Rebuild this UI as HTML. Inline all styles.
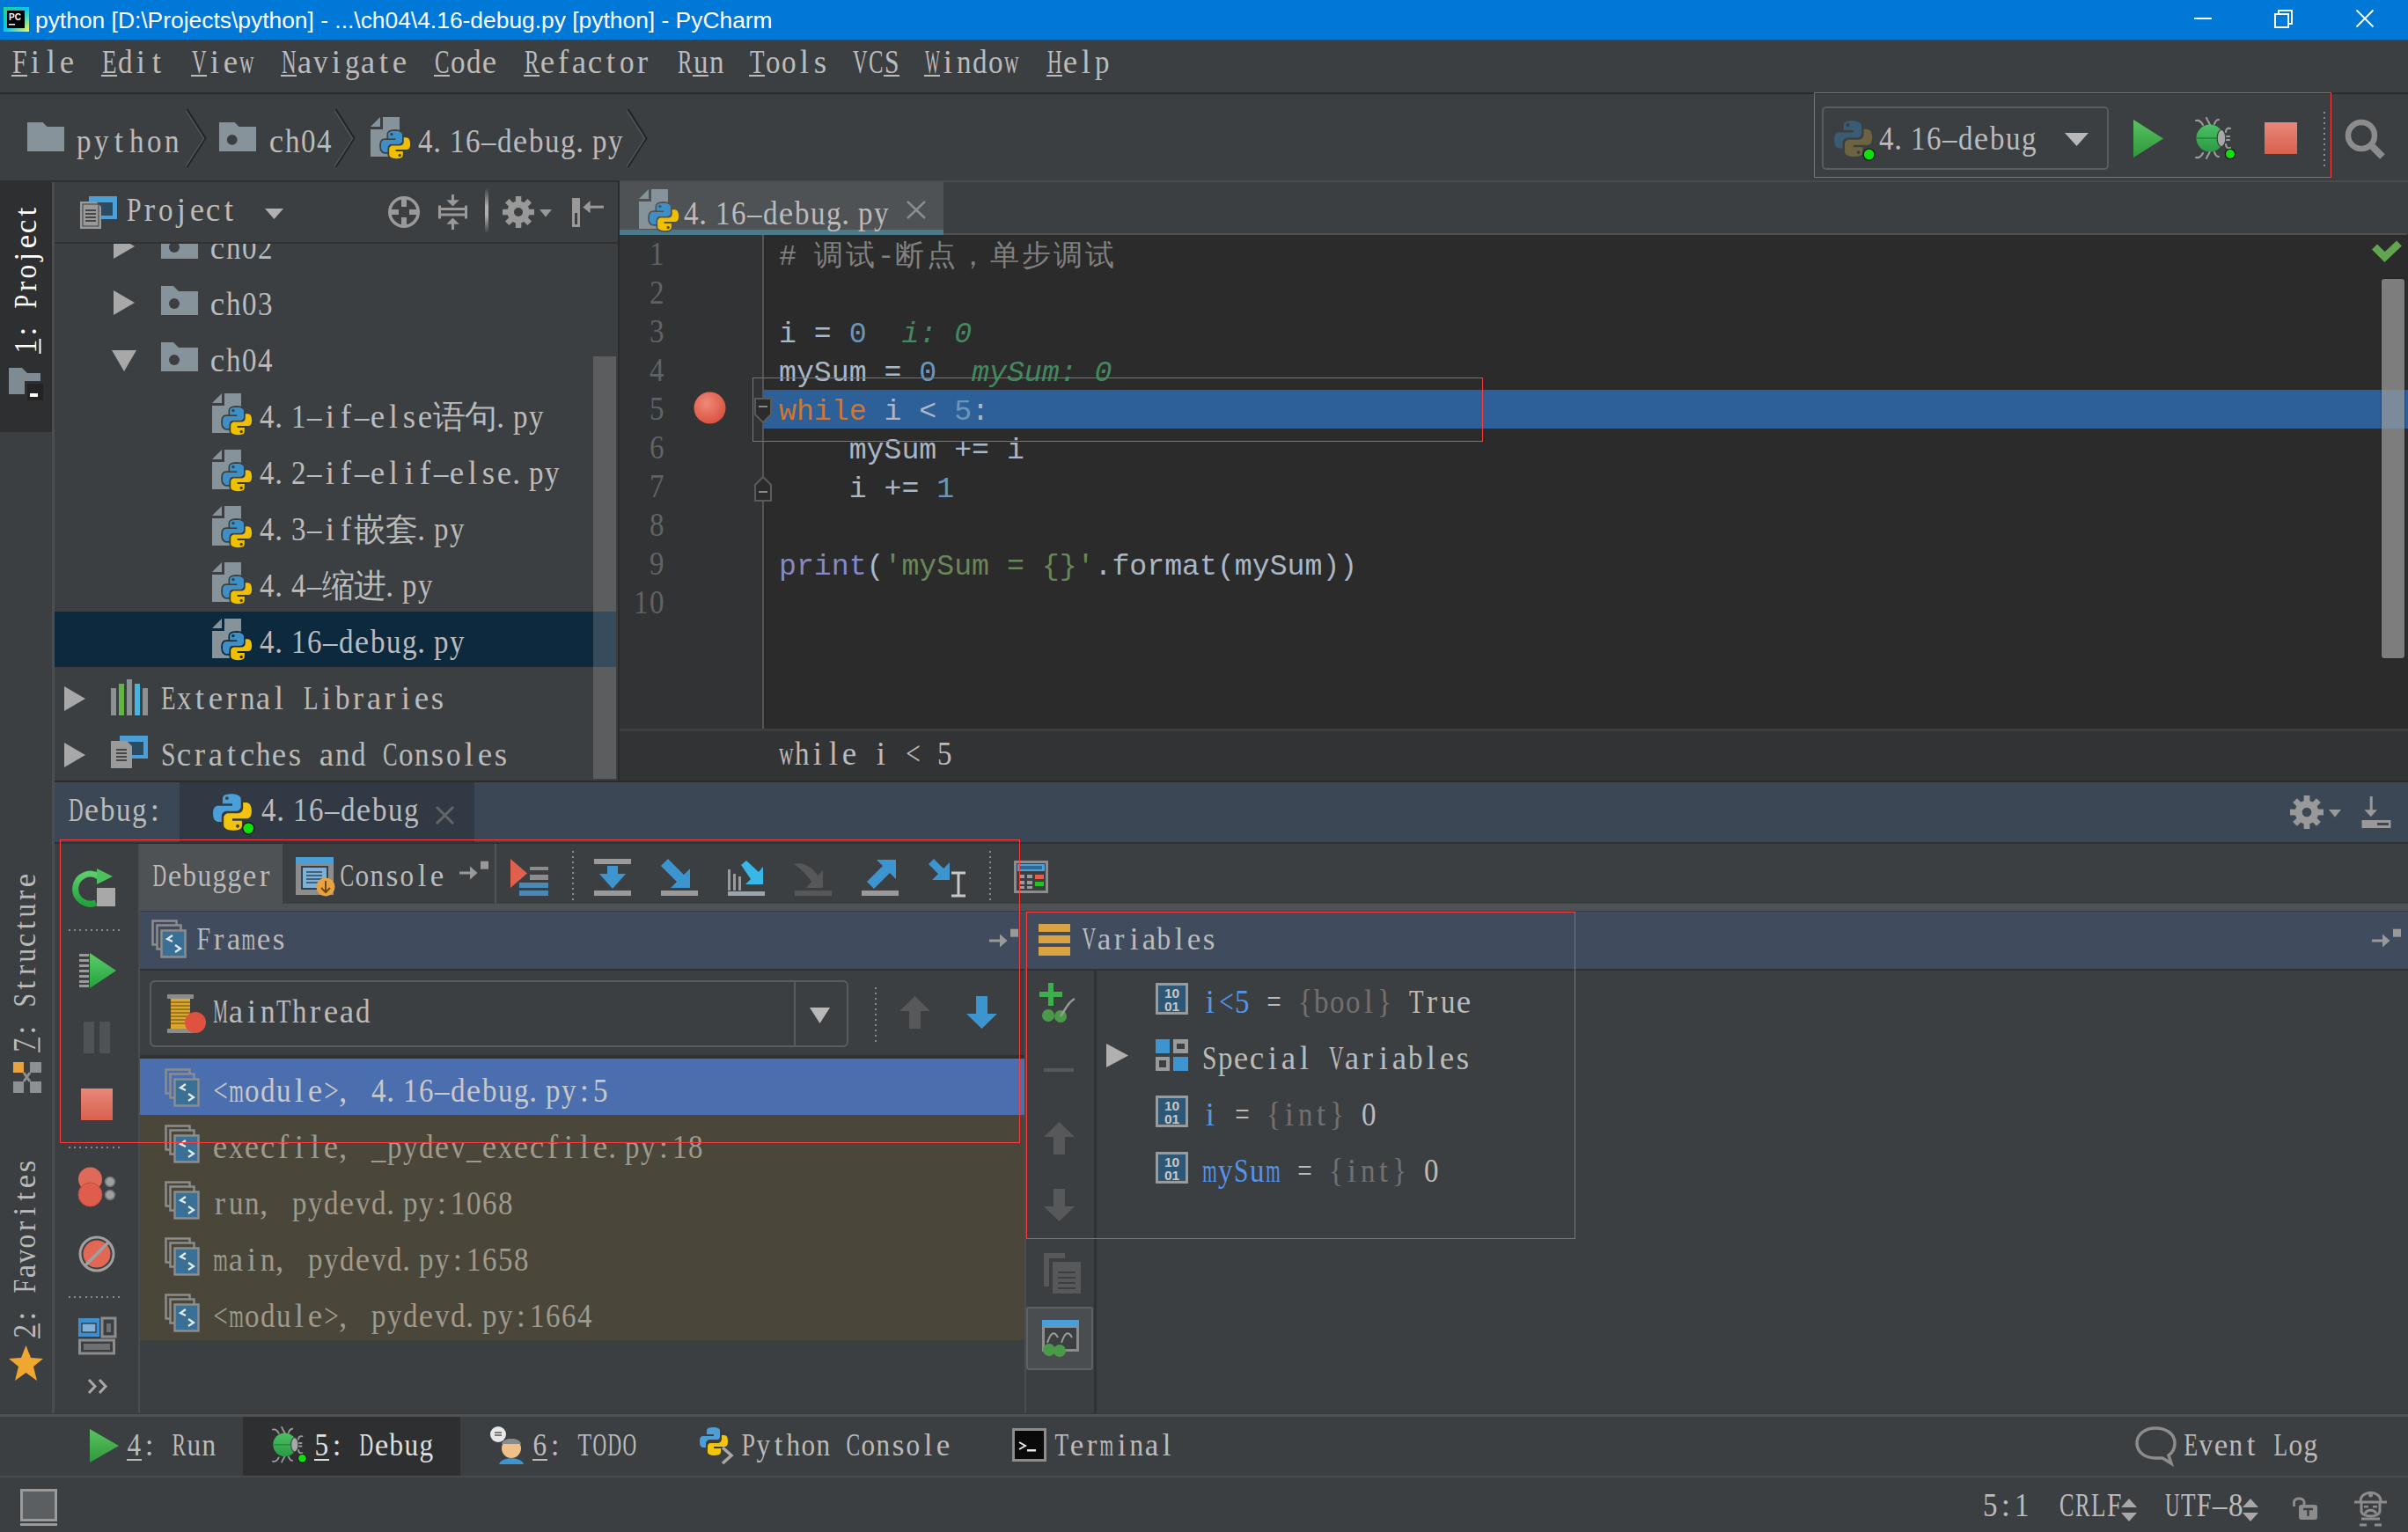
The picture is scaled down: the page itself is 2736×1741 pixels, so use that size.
<!DOCTYPE html>
<html><head><meta charset="utf-8">
<style>
*{margin:0;padding:0;box-sizing:border-box}
html,body{width:2736px;height:1741px;overflow:hidden;background:#3c3f41;position:relative}
.a{position:absolute}
.t{position:absolute;white-space:pre;font-family:"Liberation Serif",serif;font-size:37px;color:#bbbbbb;line-height:1}
.t i{display:inline-block;width:18px;text-align:center;font-style:normal}
.t i.u{background:linear-gradient(currentColor,currentColor) no-repeat 0 33px/100% 2px}
.t b{display:inline-block;font-weight:normal}
.v{font-size:35px}.v i{width:17px}.w20 i{width:20px}
.c{position:absolute;white-space:pre;font-family:"Liberation Mono",monospace;font-size:33.2px;line-height:1;color:#a9b7c6}
.s{position:absolute;white-space:pre;font-family:"Liberation Sans",sans-serif;line-height:1}
u{text-decoration:underline;text-decoration-thickness:2px;text-underline-offset:4px;}
svg{position:absolute;overflow:visible}
.k{color:#cc7832}.n{color:#6897bb}.st{color:#6a8759}.b{color:#8888c6}.cm{color:#808080}.iv{color:#43895f;font-style:italic}
</style></head><body>
<div class="a" style="left:0px;top:0px;width:2736px;height:45px;background:#0078d7;"></div>
<div class="s" style="left:40px;top:10px;font-size:26.4px;color:#ffffff">python [D:\Projects\python] - ...\ch04\4.16-debug.py [python] - PyCharm</div>
<svg style="left:4px;top:8px;" width="29" height="28" viewBox="0 0 29 28"><defs><linearGradient id="pcg" x1="0" y1="0" x2="1" y2="1"><stop offset="0" stop-color="#21d789"/><stop offset="0.5" stop-color="#07c3f2"/><stop offset="1" stop-color="#fcf84a"/></linearGradient></defs><rect width="29" height="28" fill="url(#pcg)"/><rect x="4" y="4" width="20" height="20" fill="#000"/><text x="6" y="15" font-family="Liberation Sans" font-weight="bold" font-size="10" fill="#fff">PC</text><rect x="6" y="19" width="7" height="1.5" fill="#fff"/></svg>
<div class="a" style="left:2493px;top:20px;width:20px;height:2px;background:#ffffff;"></div>
<svg style="left:2584px;top:11px;" width="21" height="21" viewBox="0 0 21 21"><rect x="1" y="5" width="15" height="15" fill="none" stroke="#fff" stroke-width="2"/><path d="M5 5V1H20V16H16" fill="none" stroke="#fff" stroke-width="2"/></svg>
<svg style="left:2677px;top:11px;" width="20" height="20" viewBox="0 0 20 20"><path d="M0.5 0.5L19.5 19.5M19.5 0.5L0.5 19.5" stroke="#fff" stroke-width="1.8"/></svg>
<div class="a" style="left:0px;top:45px;width:2736px;height:60px;background:#3c3f41;"></div>
<div class="a" style="left:0px;top:105px;width:2736px;height:2px;background:#2b2b2b;"></div>
<div class="t" style="left:13px;top:52px;color:#bbbbbb;"><i class="u"><b style="width:20.6px;margin-left:-1.3px;transform:scaleX(0.802)">F</b></i><i>i</i><i>l</i><i>e</i></div>
<div class="t" style="left:115px;top:52px;color:#bbbbbb;"><i class="u"><b style="width:22.6px;margin-left:-2.3px;transform:scaleX(0.730)">E</b></i><i><b style="width:18.5px;margin-left:-0.2px;transform:scaleX(0.892)">d</b></i><i>i</i><i>t</i></div>
<div class="t" style="left:217px;top:52px;color:#bbbbbb;"><i class="u"><b style="width:26.7px;margin-left:-4.4px;transform:scaleX(0.618)">V</b></i><i>i</i><i>e</i><i><b style="width:26.7px;margin-left:-4.4px;transform:scaleX(0.618)">w</b></i></div>
<div class="t" style="left:319px;top:52px;color:#bbbbbb;"><i class="u"><b style="width:26.7px;margin-left:-4.4px;transform:scaleX(0.618)">N</b></i><i>a</i><i><b style="width:18.5px;margin-left:-0.2px;transform:scaleX(0.892)">v</b></i><i>i</i><i><b style="width:18.5px;margin-left:-0.2px;transform:scaleX(0.892)">g</b></i><i>a</i><i>t</i><i>e</i></div>
<div class="t" style="left:493px;top:52px;color:#bbbbbb;"><i class="u"><b style="width:24.7px;margin-left:-3.3px;transform:scaleX(0.669)">C</b></i><i><b style="width:18.5px;margin-left:-0.2px;transform:scaleX(0.892)">o</b></i><i><b style="width:18.5px;margin-left:-0.2px;transform:scaleX(0.892)">d</b></i><i>e</i></div>
<div class="t" style="left:595px;top:52px;color:#bbbbbb;"><i class="u"><b style="width:24.7px;margin-left:-3.3px;transform:scaleX(0.669)">R</b></i><i>e</i><i>f</i><i>a</i><i>c</i><i>t</i><i><b style="width:18.5px;margin-left:-0.2px;transform:scaleX(0.892)">o</b></i><i>r</i></div>
<div class="t" style="left:769px;top:52px;color:#bbbbbb;"><i><b style="width:24.7px;margin-left:-3.3px;transform:scaleX(0.669)">R</b></i><i class="u"><b style="width:18.5px;margin-left:-0.2px;transform:scaleX(0.892)">u</b></i><i><b style="width:18.5px;margin-left:-0.2px;transform:scaleX(0.892)">n</b></i></div>
<div class="t" style="left:851px;top:52px;color:#bbbbbb;"><i class="u"><b style="width:22.6px;margin-left:-2.3px;transform:scaleX(0.730)">T</b></i><i><b style="width:18.5px;margin-left:-0.2px;transform:scaleX(0.892)">o</b></i><i><b style="width:18.5px;margin-left:-0.2px;transform:scaleX(0.892)">o</b></i><i>l</i><i>s</i></div>
<div class="t" style="left:968px;top:52px;color:#bbbbbb;"><i><b style="width:26.7px;margin-left:-4.4px;transform:scaleX(0.618)">V</b></i><i><b style="width:24.7px;margin-left:-3.3px;transform:scaleX(0.669)">C</b></i><i class="u"><b style="width:20.6px;margin-left:-1.3px;transform:scaleX(0.802)">S</b></i></div>
<div class="t" style="left:1050px;top:52px;color:#bbbbbb;"><i class="u"><b style="width:34.9px;margin-left:-8.5px;transform:scaleX(0.472)">W</b></i><i>i</i><i><b style="width:18.5px;margin-left:-0.2px;transform:scaleX(0.892)">n</b></i><i><b style="width:18.5px;margin-left:-0.2px;transform:scaleX(0.892)">d</b></i><i><b style="width:18.5px;margin-left:-0.2px;transform:scaleX(0.892)">o</b></i><i><b style="width:26.7px;margin-left:-4.4px;transform:scaleX(0.618)">w</b></i></div>
<div class="t" style="left:1189px;top:52px;color:#bbbbbb;"><i class="u"><b style="width:26.7px;margin-left:-4.4px;transform:scaleX(0.618)">H</b></i><i>e</i><i>l</i><i><b style="width:18.5px;margin-left:-0.2px;transform:scaleX(0.892)">p</b></i></div>
<div class="a" style="left:0px;top:107px;width:2736px;height:98px;background:#3c3f41;"></div>
<div class="a" style="left:0px;top:205px;width:704px;height:2px;background:#2e2f30;"></div>
<div class="a" style="left:704px;top:205px;width:2032px;height:2px;background:#4a4a4a;"></div>
<svg style="left:31px;top:139px;" width="42" height="33" viewBox="0 0 42 33"><path d="M0 0H17.6L22.6 5H42V33H0Z" fill="#87939a"/></svg>
<div class="t w20" style="left:85px;top:142px"><i><b style="width:18.5px;margin-left:0.8px;transform:scaleX(0.892)">p</b></i><i><b style="width:18.5px;margin-left:0.8px;transform:scaleX(0.892)">y</b></i><i>t</i><i><b style="width:18.5px;margin-left:0.8px;transform:scaleX(0.892)">h</b></i><i><b style="width:18.5px;margin-left:0.8px;transform:scaleX(0.892)">o</b></i><i><b style="width:18.5px;margin-left:0.8px;transform:scaleX(0.892)">n</b></i></div>
<svg style="left:211px;top:123px;" width="24" height="68" viewBox="0 0 24 68"><path d="M1.5 1L22.5 34L1.5 67" fill="none" stroke="#232425" stroke-width="2"/><path d="M0 2.5L20.5 34.5L0 66" fill="none" stroke="#56595b" stroke-width="1.2"/></svg>
<svg style="left:249px;top:139px;" width="42" height="33" viewBox="0 0 42 33"><path d="M0 0H17.6L22.6 5H42V33H0Z" fill="#87939a"/><circle cx="14.7" cy="19.8" r="5.9" fill="#3c3f41"/></svg>
<div class="t" style="left:305px;top:142px;color:#bbbbbb;"><i>c</i><i><b style="width:18.5px;margin-left:-0.2px;transform:scaleX(0.892)">h</b></i><i><b style="width:18.5px;margin-left:-0.2px;transform:scaleX(0.892)">0</b></i><i><b style="width:18.5px;margin-left:-0.2px;transform:scaleX(0.892)">4</b></i></div>
<svg style="left:380px;top:123px;" width="24" height="68" viewBox="0 0 24 68"><path d="M1.5 1L22.5 34L1.5 67" fill="none" stroke="#232425" stroke-width="2"/><path d="M0 2.5L20.5 34.5L0 66" fill="none" stroke="#56595b" stroke-width="1.2"/></svg>
<svg style="left:421px;top:133px;" width="46" height="50" viewBox="0 0 46 50"><path d="M0 11L11 0V11Z" fill="#87939a"/><path d="M14 0H33V33H14Z" fill="#87939a"/><path d="M0 14H14V45H0Z" fill="#87939a"/><path d="M14 33H33V45H14Z" fill="#87939a"/><g transform="translate(12,15) scale(0.92)"><path d="M17 1C9 1 9 4 9 6V10H18V12H5C2 12 0 14 0 19C0 24 2 27 5 27H8V22C8 19 10 17 13 17H22C24 17 26 15 26 13V6C26 3 23 1 17 1Z" fill="#3e8fc6" stroke="#3c3f41" stroke-width="4" paint-order="stroke"/><path d="M19 35C27 35 27 32 27 30V26H18V24H31C34 24 36 22 36 17C36 12 34 9 31 9H28V14C28 17 26 19 23 19H14C12 19 10 21 10 23V30C10 33 13 35 19 35Z" fill="#f0c000" stroke="#3c3f41" stroke-width="4" paint-order="stroke"/><path d="M17 1C9 1 9 4 9 6V10H18V12H5C2 12 0 14 0 19C0 24 2 27 5 27H8V22C8 19 10 17 13 17H22C24 17 26 15 26 13V6C26 3 23 1 17 1Z" fill="#3e8fc6"/><circle cx="13" cy="5" r="1.8" fill="#3c3f41"/><circle cx="23" cy="31" r="1.8" fill="#3c3f41"/></g></svg>
<div class="t" style="left:474px;top:142px;color:#bbbbbb;"><i><b style="width:18.5px;margin-left:-0.2px;transform:scaleX(0.892)">4</b></i><i style="text-align:left">.</i><i><b style="width:18.5px;margin-left:-0.2px;transform:scaleX(0.892)">1</b></i><i><b style="width:18.5px;margin-left:-0.2px;transform:scaleX(0.892)">6</b></i><i><b style="width:18.5px;margin-left:-0.2px;transform:scaleX(0.892)">–</b></i><i><b style="width:18.5px;margin-left:-0.2px;transform:scaleX(0.892)">d</b></i><i>e</i><i><b style="width:18.5px;margin-left:-0.2px;transform:scaleX(0.892)">b</b></i><i><b style="width:18.5px;margin-left:-0.2px;transform:scaleX(0.892)">u</b></i><i><b style="width:18.5px;margin-left:-0.2px;transform:scaleX(0.892)">g</b></i><i style="text-align:left">.</i><i><b style="width:18.5px;margin-left:-0.2px;transform:scaleX(0.892)">p</b></i><i><b style="width:18.5px;margin-left:-0.2px;transform:scaleX(0.892)">y</b></i></div>
<svg style="left:712px;top:123px;" width="24" height="68" viewBox="0 0 24 68"><path d="M1.5 1L22.5 34L1.5 67" fill="none" stroke="#232425" stroke-width="2"/><path d="M0 2.5L20.5 34.5L0 66" fill="none" stroke="#56595b" stroke-width="1.2"/></svg>
<div class="a" style="left:2061px;top:105px;width:588px;height:97px;border:1px solid #ff3b3b"></div>
<div class="a" style="left:2070px;top:121px;width:326px;height:72px;border:2px solid #5a5d5f;border-radius:5px;background:#3c3f41"></div>
<svg style="left:2084px;top:136px;" width="44" height="44" viewBox="0 0 44 44"><g transform="scale(1.2)"><path d="M17 1C9 1 9 4 9 6V10H18V12H5C2 12 0 14 0 19C0 24 2 27 5 27H8V22C8 19 10 17 13 17H22C24 17 26 15 26 13V6C26 3 23 1 17 1Z" fill="#3b5b72"/><circle cx="13" cy="5" r="1.6" fill="#3c3f41"/><path d="M19 35C27 35 27 32 27 30V26H18V24H31C34 24 36 22 36 17C36 12 34 9 31 9H28V14C28 17 26 19 23 19H14C12 19 10 21 10 23V30C10 33 13 35 19 35Z" fill="#6e6340"/><circle cx="23" cy="31" r="1.6" fill="#3c3f41"/><circle cx="33" cy="33" r="6" fill="#1a1a1a"/><circle cx="33" cy="33" r="4.8" fill="#10e010"/></g></svg>
<div class="t" style="left:2134px;top:139px;color:#bbbbbb;"><i><b style="width:18.5px;margin-left:-0.2px;transform:scaleX(0.892)">4</b></i><i style="text-align:left">.</i><i><b style="width:18.5px;margin-left:-0.2px;transform:scaleX(0.892)">1</b></i><i><b style="width:18.5px;margin-left:-0.2px;transform:scaleX(0.892)">6</b></i><i><b style="width:18.5px;margin-left:-0.2px;transform:scaleX(0.892)">–</b></i><i><b style="width:18.5px;margin-left:-0.2px;transform:scaleX(0.892)">d</b></i><i>e</i><i><b style="width:18.5px;margin-left:-0.2px;transform:scaleX(0.892)">b</b></i><i><b style="width:18.5px;margin-left:-0.2px;transform:scaleX(0.892)">u</b></i><i><b style="width:18.5px;margin-left:-0.2px;transform:scaleX(0.892)">g</b></i></div>
<svg style="left:2346px;top:151px;" width="27" height="15" viewBox="0 0 27 15"><path d="M0 0H27L13.5 15Z" fill="#b8b8b8"/></svg>
<svg style="left:2424px;top:136px;" width="34" height="43" viewBox="0 0 34 43"><defs><linearGradient id="rg" x1="0" y1="0" x2="0" y2="1"><stop offset="0" stop-color="#59c163"/><stop offset="1" stop-color="#2f9a3a"/></linearGradient></defs><path d="M0 0L34 21.5L0 43Z" fill="url(#rg)"/></svg>
<svg style="left:2494px;top:134px;" width="48" height="48" viewBox="0 0 48 48"><g transform="scale(1.0)"><g stroke="#9a9a9a" stroke-width="2.2" fill="none" stroke-linecap="round"><path d="M1 3C5 2 7 4 9 8M13 0C14 3 16 5 17 8M27 2C24 2 23 4 22 7M1 45C5 46 7 44 9 40M13 46C14 43 16 41 17 38M27 44C24 44 23 42 22 39M40 12C37 11 35 13 35 16M40 34C37 35 35 33 35 30M35 21H39M35 25H39"/></g><defs><linearGradient id="bgd" x1="0" y1="0" x2="0" y2="1"><stop offset="0" stop-color="#4cc063"/><stop offset="1" stop-color="#2a9a45"/></linearGradient></defs><circle cx="17" cy="23" r="15.5" fill="url(#bgd)"/><path d="M2 23H30" stroke="#2b8a40" stroke-width="1.8"/><ellipse cx="30" cy="23" rx="4.8" ry="9.5" fill="#a8a8a8" stroke="#3c3f41" stroke-width="1.2"/><circle cx="40" cy="41" r="6.3" fill="#1a1a1a"/><circle cx="40" cy="41" r="5" fill="#10e010"/></g></svg>
<svg style="left:2573px;top:139px;" width="37" height="36" viewBox="0 0 37 36"><defs><linearGradient id="sg" x1="0" y1="0" x2="0" y2="1"><stop offset="0" stop-color="#e8887a"/><stop offset="1" stop-color="#d9604e"/></linearGradient></defs><rect width="37" height="36" fill="url(#sg)"/></svg>
<div class="a" style="left:2640px;top:127px;width:2px;height:62px;background:repeating-linear-gradient(#8a8a8a 0 2px,transparent 2px 6px)"></div>
<svg style="left:2665px;top:136px;" width="46" height="46" viewBox="0 0 46 46"><circle cx="18" cy="18" r="15" fill="none" stroke="#8c8c8c" stroke-width="6.5"/><path d="M29 29L42 42" stroke="#8c8c8c" stroke-width="8"/></svg>
<div class="a" style="left:0px;top:207px;width:59px;height:1400px;background:#3c3f41;"></div>
<div class="a" style="left:0px;top:207px;width:59px;height:284px;background:#2d2f30;"></div>
<div class="a" style="left:59px;top:207px;width:3px;height:1400px;background:#4b4d4f;"></div>
<div class="t v" style="left:29px;top:317px;color:#ffffff;transform:translate(-50%,-50%) rotate(-90deg);transform-origin:50% 50%"><i class="u"><b style="width:18.5px;margin-left:-0.8px;transform:scaleX(0.892)">1</b></i><i>:</i><i> </i><i><b style="width:20.6px;margin-left:-1.8px;transform:scaleX(0.802)">P</b></i><i>r</i><i><b style="width:18.5px;margin-left:-0.8px;transform:scaleX(0.892)">o</b></i><i>j</i><i>e</i><i>c</i><i>t</i></div>
<svg style="left:10px;top:418px;" width="40" height="37" viewBox="0 0 40 37"><path d="M0 0H15L21 6H36V15H18V30H0Z" fill="#7f8b92"/><rect x="21" y="18" width="18" height="19" fill="#232323"/><rect x="24" y="29" width="9" height="4" fill="#ffffff"/></svg>
<div class="t v" style="left:28px;top:1094px;color:#bbbbbb;transform:translate(-50%,-50%) rotate(-90deg);transform-origin:50% 50%"><i class="u"><b style="width:18.5px;margin-left:-0.8px;transform:scaleX(0.892)">7</b></i><i>:</i><i> </i><i><b style="width:20.6px;margin-left:-1.8px;transform:scaleX(0.802)">S</b></i><i>t</i><i>r</i><i><b style="width:18.5px;margin-left:-0.8px;transform:scaleX(0.892)">u</b></i><i>c</i><i>t</i><i><b style="width:18.5px;margin-left:-0.8px;transform:scaleX(0.892)">u</b></i><i>r</i><i>e</i></div>
<svg style="left:15px;top:1207px;" width="32" height="35" viewBox="0 0 32 35"><rect x="0" y="0" width="12" height="12" fill="#e8a33e"/><rect x="19" y="0" width="13" height="12" fill="#8c9194"/><rect x="0" y="22" width="12" height="13" fill="#8c9194"/><rect x="19" y="22" width="13" height="13" fill="#8c9194"/><path d="M12 12L19 22M19 12L12 22" stroke="#8c9194" stroke-width="3"/></svg>
<div class="t v" style="left:28px;top:1419px;color:#bbbbbb;transform:translate(-50%,-50%) rotate(-90deg);transform-origin:50% 50%"><i class="u"><b style="width:18.5px;margin-left:-0.8px;transform:scaleX(0.892)">2</b></i><i>:</i><i> </i><i><b style="width:20.6px;margin-left:-1.8px;transform:scaleX(0.802)">F</b></i><i>a</i><i><b style="width:18.5px;margin-left:-0.8px;transform:scaleX(0.892)">v</b></i><i><b style="width:18.5px;margin-left:-0.8px;transform:scaleX(0.892)">o</b></i><i>r</i><i>i</i><i>t</i><i>e</i><i>s</i></div>
<svg style="left:10px;top:1529px;" width="39" height="40" viewBox="0 0 39 40"><path d="M19.5 0L25 14L39 15L28 24L32 40L19.5 31L7 40L11 24L0 15L14 14Z" fill="#f0a732"/></svg>
<div class="a" style="left:62px;top:207px;width:640px;height:680px;background:#3c3f41;"></div>
<div class="a" style="left:62px;top:275px;width:640px;height:2px;background:#2f3133;"></div>
<svg style="left:91px;top:223px;" width="42" height="37" viewBox="0 0 42 37"><rect x="10" y="0" width="32" height="26" fill="#4a9fd8"/><rect x="15" y="7" width="22" height="15" fill="#2c4a60"/><path d="M0 6H18L24 12V37H0Z" fill="#9a9a9a"/><g stroke="#2b2b2b" stroke-width="1.6"><path d="M6 16H18M6 20H18M6 24H18M6 28H18"/></g><rect x="3" y="9" width="18" height="25" fill="none" stroke="#3c3f41" stroke-width="1"/></svg>
<div class="t" style="left:143px;top:220px;color:#bbbbbb;"><i><b style="width:20.6px;margin-left:-1.3px;transform:scaleX(0.802)">P</b></i><i>r</i><i><b style="width:18.5px;margin-left:-0.2px;transform:scaleX(0.892)">o</b></i><i>j</i><i>e</i><i>c</i><i>t</i></div>
<svg style="left:301px;top:237px;" width="21" height="12" viewBox="0 0 21 12"><path d="M0 0H21L10.5 12Z" fill="#b0b0b0"/></svg>
<svg style="left:441px;top:223px;" width="36" height="36" viewBox="0 0 36 36"><circle cx="18" cy="18" r="16.2" fill="none" stroke="#999" stroke-width="3.6"/><g fill="#999"><rect x="15" y="2" width="6" height="10"/><rect x="15" y="24" width="6" height="10"/><rect x="2" y="15" width="10" height="6"/><rect x="24" y="15" width="10" height="6"/></g></svg>
<svg style="left:498px;top:221px;" width="33" height="40" viewBox="0 0 33 40"><g fill="#999"><rect x="0" y="12.5" width="3" height="15"/><rect x="30" y="12.5" width="3" height="15"/><rect x="0" y="15" width="33" height="3"/><rect x="0" y="21.5" width="33" height="3"/><rect x="15" y="0" width="3" height="8"/><path d="M9.3 6.3H23.8L16.5 13.5Z"/><path d="M9.3 33.7H23.8L16.5 26.5Z"/><rect x="15" y="32" width="3" height="8"/></g></svg>
<div class="a" style="left:551px;top:214px;width:4px;height:51px;background:#3c3f41;background:linear-gradient(rgba(160,160,160,0),rgba(175,175,175,1) 40%,rgba(175,175,175,1) 60%,rgba(160,160,160,0))"></div>
<svg style="left:571px;top:223px;" width="58" height="36" viewBox="0 0 58 36"><circle cx="18.0" cy="18.0" r="12.6" fill="#999"/><rect x="14.8" y="0" width="6.5" height="36" fill="#999" transform="rotate(0 18.0 18.0)"/><rect x="14.8" y="0" width="6.5" height="36" fill="#999" transform="rotate(45 18.0 18.0)"/><rect x="14.8" y="0" width="6.5" height="36" fill="#999" transform="rotate(90 18.0 18.0)"/><rect x="14.8" y="0" width="6.5" height="36" fill="#999" transform="rotate(135 18.0 18.0)"/><circle cx="18.0" cy="18.0" r="5.0" fill="#3c3f41"/><path d="M42 15.0H56L49 23.5Z" fill="#999"/></svg>
<svg style="left:650px;top:225px;" width="37" height="33" viewBox="0 0 37 33"><rect x="1.5" y="1.5" width="6" height="30" fill="none" stroke="#999" stroke-width="3"/><rect x="0" y="0" width="9" height="17" fill="#999"/><path d="M12.4 10.5L20.6 3V17.3Z" fill="#999"/><rect x="19" y="8.7" width="17" height="3" fill="#999"/></svg>
<div class="a" style="left:62px;top:277px;width:640px;height:610px;overflow:hidden">
<div class="a" style="left:0px;top:418px;width:612px;height:63px;background:#0d293e;"></div>
<svg style="left:67px;top:-10.999999999999977px;" width="24" height="28" viewBox="0 0 24 28"><path d="M0 0L24 14L0 28Z" fill="#a8a8a8"/></svg>
<svg style="left:121px;top:-15.999999999999977px;" width="42" height="33" viewBox="0 0 42 33"><path d="M0 0H14L20 6H42V33H0Z" fill="#87939a"/><circle cx="15" cy="20" r="6" fill="#3c3f41"/></svg>
<div class="t" style="left:176px;top:-14.399999999999977px"><i>c</i><i><b style="width:18.5px;margin-left:-0.2px;transform:scaleX(0.892)">h</b></i><i><b style="width:18.5px;margin-left:-0.2px;transform:scaleX(0.892)">0</b></i><i><b style="width:18.5px;margin-left:-0.2px;transform:scaleX(0.892)">2</b></i></div>
<svg style="left:67px;top:53.00000000000003px;" width="24" height="28" viewBox="0 0 24 28"><path d="M0 0L24 14L0 28Z" fill="#a8a8a8"/></svg>
<svg style="left:121px;top:48.00000000000003px;" width="42" height="33" viewBox="0 0 42 33"><path d="M0 0H14L20 6H42V33H0Z" fill="#87939a"/><circle cx="15" cy="20" r="6" fill="#3c3f41"/></svg>
<div class="t" style="left:176px;top:49.60000000000002px"><i>c</i><i><b style="width:18.5px;margin-left:-0.2px;transform:scaleX(0.892)">h</b></i><i><b style="width:18.5px;margin-left:-0.2px;transform:scaleX(0.892)">0</b></i><i><b style="width:18.5px;margin-left:-0.2px;transform:scaleX(0.892)">3</b></i></div>
<svg style="left:65px;top:121.00000000000003px;" width="28" height="24" viewBox="0 0 28 24"><path d="M0 0H28L14 24Z" fill="#a8a8a8"/></svg>
<svg style="left:121px;top:112.00000000000003px;" width="42" height="33" viewBox="0 0 42 33"><path d="M0 0H14L20 6H42V33H0Z" fill="#87939a"/><circle cx="15" cy="20" r="6" fill="#3c3f41"/></svg>
<div class="t" style="left:176px;top:113.60000000000002px"><i>c</i><i><b style="width:18.5px;margin-left:-0.2px;transform:scaleX(0.892)">h</b></i><i><b style="width:18.5px;margin-left:-0.2px;transform:scaleX(0.892)">0</b></i><i><b style="width:18.5px;margin-left:-0.2px;transform:scaleX(0.892)">4</b></i></div>
<svg style="left:179px;top:170.00000000000003px;" width="46" height="50" viewBox="0 0 46 50"><path d="M0 11L11 0V11Z" fill="#87939a"/><path d="M14 0H33V33H14Z" fill="#87939a"/><path d="M0 14H14V45H0Z" fill="#87939a"/><path d="M14 33H33V45H14Z" fill="#87939a"/><g transform="translate(12,15) scale(0.92)"><path d="M17 1C9 1 9 4 9 6V10H18V12H5C2 12 0 14 0 19C0 24 2 27 5 27H8V22C8 19 10 17 13 17H22C24 17 26 15 26 13V6C26 3 23 1 17 1Z" fill="#3e8fc6" stroke="#3c3f41" stroke-width="4" paint-order="stroke"/><path d="M19 35C27 35 27 32 27 30V26H18V24H31C34 24 36 22 36 17C36 12 34 9 31 9H28V14C28 17 26 19 23 19H14C12 19 10 21 10 23V30C10 33 13 35 19 35Z" fill="#f0c000" stroke="#3c3f41" stroke-width="4" paint-order="stroke"/><path d="M17 1C9 1 9 4 9 6V10H18V12H5C2 12 0 14 0 19C0 24 2 27 5 27H8V22C8 19 10 17 13 17H22C24 17 26 15 26 13V6C26 3 23 1 17 1Z" fill="#3e8fc6"/><circle cx="13" cy="5" r="1.8" fill="#3c3f41"/><circle cx="23" cy="31" r="1.8" fill="#3c3f41"/></g></svg>
<div class="t" style="left:232px;top:177.60000000000002px"><i><b style="width:18.5px;margin-left:-0.2px;transform:scaleX(0.892)">4</b></i><i style="text-align:left">.</i><i><b style="width:18.5px;margin-left:-0.2px;transform:scaleX(0.892)">1</b></i><i><b style="width:18.5px;margin-left:-0.2px;transform:scaleX(0.892)">–</b></i><i>i</i><i>f</i><i><b style="width:18.5px;margin-left:-0.2px;transform:scaleX(0.892)">–</b></i><i>e</i><i>l</i><i>s</i><i>e</i><i style="width:36px">语</i><i style="width:36px">句</i><i style="text-align:left">.</i><i><b style="width:18.5px;margin-left:-0.2px;transform:scaleX(0.892)">p</b></i><i><b style="width:18.5px;margin-left:-0.2px;transform:scaleX(0.892)">y</b></i></div>
<svg style="left:179px;top:234.0px;" width="46" height="50" viewBox="0 0 46 50"><path d="M0 11L11 0V11Z" fill="#87939a"/><path d="M14 0H33V33H14Z" fill="#87939a"/><path d="M0 14H14V45H0Z" fill="#87939a"/><path d="M14 33H33V45H14Z" fill="#87939a"/><g transform="translate(12,15) scale(0.92)"><path d="M17 1C9 1 9 4 9 6V10H18V12H5C2 12 0 14 0 19C0 24 2 27 5 27H8V22C8 19 10 17 13 17H22C24 17 26 15 26 13V6C26 3 23 1 17 1Z" fill="#3e8fc6" stroke="#3c3f41" stroke-width="4" paint-order="stroke"/><path d="M19 35C27 35 27 32 27 30V26H18V24H31C34 24 36 22 36 17C36 12 34 9 31 9H28V14C28 17 26 19 23 19H14C12 19 10 21 10 23V30C10 33 13 35 19 35Z" fill="#f0c000" stroke="#3c3f41" stroke-width="4" paint-order="stroke"/><path d="M17 1C9 1 9 4 9 6V10H18V12H5C2 12 0 14 0 19C0 24 2 27 5 27H8V22C8 19 10 17 13 17H22C24 17 26 15 26 13V6C26 3 23 1 17 1Z" fill="#3e8fc6"/><circle cx="13" cy="5" r="1.8" fill="#3c3f41"/><circle cx="23" cy="31" r="1.8" fill="#3c3f41"/></g></svg>
<div class="t" style="left:232px;top:241.60000000000002px"><i><b style="width:18.5px;margin-left:-0.2px;transform:scaleX(0.892)">4</b></i><i style="text-align:left">.</i><i><b style="width:18.5px;margin-left:-0.2px;transform:scaleX(0.892)">2</b></i><i><b style="width:18.5px;margin-left:-0.2px;transform:scaleX(0.892)">–</b></i><i>i</i><i>f</i><i><b style="width:18.5px;margin-left:-0.2px;transform:scaleX(0.892)">–</b></i><i>e</i><i>l</i><i>i</i><i>f</i><i><b style="width:18.5px;margin-left:-0.2px;transform:scaleX(0.892)">–</b></i><i>e</i><i>l</i><i>s</i><i>e</i><i style="text-align:left">.</i><i><b style="width:18.5px;margin-left:-0.2px;transform:scaleX(0.892)">p</b></i><i><b style="width:18.5px;margin-left:-0.2px;transform:scaleX(0.892)">y</b></i></div>
<svg style="left:179px;top:298.0px;" width="46" height="50" viewBox="0 0 46 50"><path d="M0 11L11 0V11Z" fill="#87939a"/><path d="M14 0H33V33H14Z" fill="#87939a"/><path d="M0 14H14V45H0Z" fill="#87939a"/><path d="M14 33H33V45H14Z" fill="#87939a"/><g transform="translate(12,15) scale(0.92)"><path d="M17 1C9 1 9 4 9 6V10H18V12H5C2 12 0 14 0 19C0 24 2 27 5 27H8V22C8 19 10 17 13 17H22C24 17 26 15 26 13V6C26 3 23 1 17 1Z" fill="#3e8fc6" stroke="#3c3f41" stroke-width="4" paint-order="stroke"/><path d="M19 35C27 35 27 32 27 30V26H18V24H31C34 24 36 22 36 17C36 12 34 9 31 9H28V14C28 17 26 19 23 19H14C12 19 10 21 10 23V30C10 33 13 35 19 35Z" fill="#f0c000" stroke="#3c3f41" stroke-width="4" paint-order="stroke"/><path d="M17 1C9 1 9 4 9 6V10H18V12H5C2 12 0 14 0 19C0 24 2 27 5 27H8V22C8 19 10 17 13 17H22C24 17 26 15 26 13V6C26 3 23 1 17 1Z" fill="#3e8fc6"/><circle cx="13" cy="5" r="1.8" fill="#3c3f41"/><circle cx="23" cy="31" r="1.8" fill="#3c3f41"/></g></svg>
<div class="t" style="left:232px;top:305.6px"><i><b style="width:18.5px;margin-left:-0.2px;transform:scaleX(0.892)">4</b></i><i style="text-align:left">.</i><i><b style="width:18.5px;margin-left:-0.2px;transform:scaleX(0.892)">3</b></i><i><b style="width:18.5px;margin-left:-0.2px;transform:scaleX(0.892)">–</b></i><i>i</i><i>f</i><i style="width:36px">嵌</i><i style="width:36px">套</i><i style="text-align:left">.</i><i><b style="width:18.5px;margin-left:-0.2px;transform:scaleX(0.892)">p</b></i><i><b style="width:18.5px;margin-left:-0.2px;transform:scaleX(0.892)">y</b></i></div>
<svg style="left:179px;top:362.0px;" width="46" height="50" viewBox="0 0 46 50"><path d="M0 11L11 0V11Z" fill="#87939a"/><path d="M14 0H33V33H14Z" fill="#87939a"/><path d="M0 14H14V45H0Z" fill="#87939a"/><path d="M14 33H33V45H14Z" fill="#87939a"/><g transform="translate(12,15) scale(0.92)"><path d="M17 1C9 1 9 4 9 6V10H18V12H5C2 12 0 14 0 19C0 24 2 27 5 27H8V22C8 19 10 17 13 17H22C24 17 26 15 26 13V6C26 3 23 1 17 1Z" fill="#3e8fc6" stroke="#3c3f41" stroke-width="4" paint-order="stroke"/><path d="M19 35C27 35 27 32 27 30V26H18V24H31C34 24 36 22 36 17C36 12 34 9 31 9H28V14C28 17 26 19 23 19H14C12 19 10 21 10 23V30C10 33 13 35 19 35Z" fill="#f0c000" stroke="#3c3f41" stroke-width="4" paint-order="stroke"/><path d="M17 1C9 1 9 4 9 6V10H18V12H5C2 12 0 14 0 19C0 24 2 27 5 27H8V22C8 19 10 17 13 17H22C24 17 26 15 26 13V6C26 3 23 1 17 1Z" fill="#3e8fc6"/><circle cx="13" cy="5" r="1.8" fill="#3c3f41"/><circle cx="23" cy="31" r="1.8" fill="#3c3f41"/></g></svg>
<div class="t" style="left:232px;top:369.6px"><i><b style="width:18.5px;margin-left:-0.2px;transform:scaleX(0.892)">4</b></i><i style="text-align:left">.</i><i><b style="width:18.5px;margin-left:-0.2px;transform:scaleX(0.892)">4</b></i><i><b style="width:18.5px;margin-left:-0.2px;transform:scaleX(0.892)">–</b></i><i style="width:36px">缩</i><i style="width:36px">进</i><i style="text-align:left">.</i><i><b style="width:18.5px;margin-left:-0.2px;transform:scaleX(0.892)">p</b></i><i><b style="width:18.5px;margin-left:-0.2px;transform:scaleX(0.892)">y</b></i></div>
<svg style="left:179px;top:426.0px;" width="46" height="50" viewBox="0 0 46 50"><path d="M0 11L11 0V11Z" fill="#87939a"/><path d="M14 0H33V33H14Z" fill="#87939a"/><path d="M0 14H14V45H0Z" fill="#87939a"/><path d="M14 33H33V45H14Z" fill="#87939a"/><g transform="translate(12,15) scale(0.92)"><path d="M17 1C9 1 9 4 9 6V10H18V12H5C2 12 0 14 0 19C0 24 2 27 5 27H8V22C8 19 10 17 13 17H22C24 17 26 15 26 13V6C26 3 23 1 17 1Z" fill="#3e8fc6" stroke="#0d293e" stroke-width="4" paint-order="stroke"/><path d="M19 35C27 35 27 32 27 30V26H18V24H31C34 24 36 22 36 17C36 12 34 9 31 9H28V14C28 17 26 19 23 19H14C12 19 10 21 10 23V30C10 33 13 35 19 35Z" fill="#f0c000" stroke="#0d293e" stroke-width="4" paint-order="stroke"/><path d="M17 1C9 1 9 4 9 6V10H18V12H5C2 12 0 14 0 19C0 24 2 27 5 27H8V22C8 19 10 17 13 17H22C24 17 26 15 26 13V6C26 3 23 1 17 1Z" fill="#3e8fc6"/><circle cx="13" cy="5" r="1.8" fill="#0d293e"/><circle cx="23" cy="31" r="1.8" fill="#0d293e"/></g></svg>
<div class="t" style="left:232px;top:433.6px"><i><b style="width:18.5px;margin-left:-0.2px;transform:scaleX(0.892)">4</b></i><i style="text-align:left">.</i><i><b style="width:18.5px;margin-left:-0.2px;transform:scaleX(0.892)">1</b></i><i><b style="width:18.5px;margin-left:-0.2px;transform:scaleX(0.892)">6</b></i><i><b style="width:18.5px;margin-left:-0.2px;transform:scaleX(0.892)">–</b></i><i><b style="width:18.5px;margin-left:-0.2px;transform:scaleX(0.892)">d</b></i><i>e</i><i><b style="width:18.5px;margin-left:-0.2px;transform:scaleX(0.892)">b</b></i><i><b style="width:18.5px;margin-left:-0.2px;transform:scaleX(0.892)">u</b></i><i><b style="width:18.5px;margin-left:-0.2px;transform:scaleX(0.892)">g</b></i><i style="text-align:left">.</i><i><b style="width:18.5px;margin-left:-0.2px;transform:scaleX(0.892)">p</b></i><i><b style="width:18.5px;margin-left:-0.2px;transform:scaleX(0.892)">y</b></i></div>
<svg style="left:11px;top:503.0px;" width="24" height="28" viewBox="0 0 24 28"><path d="M0 0L24 14L0 28Z" fill="#a8a8a8"/></svg>
<svg style="left:64px;top:495.0px;" width="43" height="41" viewBox="0 0 43 41"><rect x="0" y="10" width="6" height="31" fill="#8c9194"/><rect x="9" y="5" width="6" height="36" fill="#62b543"/><rect x="18" y="0" width="6" height="41" fill="#8c9194"/><rect x="27" y="5" width="6" height="36" fill="#40b6e0"/><rect x="36" y="10" width="6" height="31" fill="#8c9194"/></svg>
<div class="t" style="left:120px;top:497.6px"><i><b style="width:22.6px;margin-left:-2.3px;transform:scaleX(0.730)">E</b></i><i><b style="width:18.5px;margin-left:-0.2px;transform:scaleX(0.892)">x</b></i><i>t</i><i>e</i><i>r</i><i><b style="width:18.5px;margin-left:-0.2px;transform:scaleX(0.892)">n</b></i><i>a</i><i>l</i><i> </i><i><b style="width:22.6px;margin-left:-2.3px;transform:scaleX(0.730)">L</b></i><i>i</i><i><b style="width:18.5px;margin-left:-0.2px;transform:scaleX(0.892)">b</b></i><i>r</i><i>a</i><i>r</i><i>i</i><i>e</i><i>s</i></div>
<svg style="left:11px;top:567.0px;" width="24" height="28" viewBox="0 0 24 28"><path d="M0 0L24 14L0 28Z" fill="#a8a8a8"/></svg>
<svg style="left:64px;top:559.0px" width="42" height="37" viewBox="0 0 42 37"><rect x="10" y="0" width="32" height="26" fill="#4a9fd8"/><rect x="15" y="7" width="22" height="15" fill="#2c4a60"/><path d="M0 6H18L24 12V37H0Z" fill="#9a9a9a"/><g stroke="#2b2b2b" stroke-width="1.6"><path d="M6 16H18M6 20H18M6 24H18M6 28H18"/></g></svg>
<div class="t" style="left:120px;top:561.6px"><i><b style="width:20.6px;margin-left:-1.3px;transform:scaleX(0.802)">S</b></i><i>c</i><i>r</i><i>a</i><i>t</i><i>c</i><i><b style="width:18.5px;margin-left:-0.2px;transform:scaleX(0.892)">h</b></i><i>e</i><i>s</i><i> </i><i>a</i><i><b style="width:18.5px;margin-left:-0.2px;transform:scaleX(0.892)">n</b></i><i><b style="width:18.5px;margin-left:-0.2px;transform:scaleX(0.892)">d</b></i><i> </i><i><b style="width:24.7px;margin-left:-3.3px;transform:scaleX(0.669)">C</b></i><i><b style="width:18.5px;margin-left:-0.2px;transform:scaleX(0.892)">o</b></i><i><b style="width:18.5px;margin-left:-0.2px;transform:scaleX(0.892)">n</b></i><i>s</i><i><b style="width:18.5px;margin-left:-0.2px;transform:scaleX(0.892)">o</b></i><i>l</i><i>e</i><i>s</i></div>
<div class="a" style="left:612px;top:128px;width:26px;height:480px;background:#5b5d5f;"></div>
<div class="a" style="left:612px;top:418px;width:26px;height:63px;background:#364b5b;"></div>
</div>
<div class="a" style="left:702px;top:205px;width:2px;height:682px;background:#2b2b2b;"></div>
<div class="a" style="left:704px;top:207px;width:2032px;height:60px;background:#3c3f41;"></div>
<div class="a" style="left:704px;top:207px;width:368px;height:54px;background:#4e5254;"></div>
<div class="a" style="left:704px;top:261px;width:368px;height:6px;background:#4a7b8c;"></div>
<div class="a" style="left:1072px;top:265px;width:1662px;height:2px;background:#505050;"></div>
<div class="a" style="left:2734px;top:265px;width:2px;height:622px;background:#3c3f41;"></div>
<div class="a" style="left:704px;top:267px;width:162px;height:561px;background:#313335;"></div>
<div class="a" style="left:866px;top:267px;width:2px;height:561px;background:#555555;"></div>
<div class="a" style="left:868px;top:267px;width:1868px;height:561px;background:#2b2b2b;"></div>
<svg style="left:726px;top:215px;" width="46" height="50" viewBox="0 0 46 50"><path d="M0 11L11 0V11Z" fill="#87939a"/><path d="M14 0H33V33H14Z" fill="#87939a"/><path d="M0 14H14V45H0Z" fill="#87939a"/><path d="M14 33H33V45H14Z" fill="#87939a"/><g transform="translate(12,15) scale(0.92)"><path d="M17 1C9 1 9 4 9 6V10H18V12H5C2 12 0 14 0 19C0 24 2 27 5 27H8V22C8 19 10 17 13 17H22C24 17 26 15 26 13V6C26 3 23 1 17 1Z" fill="#3e8fc6" stroke="#4e5254" stroke-width="4" paint-order="stroke"/><path d="M19 35C27 35 27 32 27 30V26H18V24H31C34 24 36 22 36 17C36 12 34 9 31 9H28V14C28 17 26 19 23 19H14C12 19 10 21 10 23V30C10 33 13 35 19 35Z" fill="#f0c000" stroke="#4e5254" stroke-width="4" paint-order="stroke"/><path d="M17 1C9 1 9 4 9 6V10H18V12H5C2 12 0 14 0 19C0 24 2 27 5 27H8V22C8 19 10 17 13 17H22C24 17 26 15 26 13V6C26 3 23 1 17 1Z" fill="#3e8fc6"/><circle cx="13" cy="5" r="1.8" fill="#4e5254"/><circle cx="23" cy="31" r="1.8" fill="#4e5254"/></g></svg>
<div class="t" style="left:776px;top:224px;color:#bbbbbb;"><i><b style="width:18.5px;margin-left:-0.2px;transform:scaleX(0.892)">4</b></i><i style="text-align:left">.</i><i><b style="width:18.5px;margin-left:-0.2px;transform:scaleX(0.892)">1</b></i><i><b style="width:18.5px;margin-left:-0.2px;transform:scaleX(0.892)">6</b></i><i><b style="width:18.5px;margin-left:-0.2px;transform:scaleX(0.892)">–</b></i><i><b style="width:18.5px;margin-left:-0.2px;transform:scaleX(0.892)">d</b></i><i>e</i><i><b style="width:18.5px;margin-left:-0.2px;transform:scaleX(0.892)">b</b></i><i><b style="width:18.5px;margin-left:-0.2px;transform:scaleX(0.892)">u</b></i><i><b style="width:18.5px;margin-left:-0.2px;transform:scaleX(0.892)">g</b></i><i style="text-align:left">.</i><i><b style="width:18.5px;margin-left:-0.2px;transform:scaleX(0.892)">p</b></i><i><b style="width:18.5px;margin-left:-0.2px;transform:scaleX(0.892)">y</b></i></div>
<svg style="left:1030px;top:228px;" width="22" height="21" viewBox="0 0 22 21"><path d="M1 1L21 20M21 1L1 20" stroke="#8a8d8f" stroke-width="2.5"/></svg>
<div class="a" style="left:868px;top:443px;width:1868px;height:44px;background:#2d5f99;"></div>
<div class="t" style="left:737px;top:270px;color:#606366"><i><b style="width:18.5px;margin-left:-0.2px;transform:scaleX(0.892)">1</b></i></div>
<div class="t" style="left:737px;top:314px;color:#606366"><i><b style="width:18.5px;margin-left:-0.2px;transform:scaleX(0.892)">2</b></i></div>
<div class="t" style="left:737px;top:358px;color:#606366"><i><b style="width:18.5px;margin-left:-0.2px;transform:scaleX(0.892)">3</b></i></div>
<div class="t" style="left:737px;top:402px;color:#606366"><i><b style="width:18.5px;margin-left:-0.2px;transform:scaleX(0.892)">4</b></i></div>
<div class="t" style="left:737px;top:446px;color:#606366"><i><b style="width:18.5px;margin-left:-0.2px;transform:scaleX(0.892)">5</b></i></div>
<div class="t" style="left:737px;top:490px;color:#606366"><i><b style="width:18.5px;margin-left:-0.2px;transform:scaleX(0.892)">6</b></i></div>
<div class="t" style="left:737px;top:534px;color:#606366"><i><b style="width:18.5px;margin-left:-0.2px;transform:scaleX(0.892)">7</b></i></div>
<div class="t" style="left:737px;top:578px;color:#606366"><i><b style="width:18.5px;margin-left:-0.2px;transform:scaleX(0.892)">8</b></i></div>
<div class="t" style="left:737px;top:622px;color:#606366"><i><b style="width:18.5px;margin-left:-0.2px;transform:scaleX(0.892)">9</b></i></div>
<div class="t" style="left:719px;top:666px;color:#606366"><i><b style="width:18.5px;margin-left:-0.2px;transform:scaleX(0.892)">1</b></i><i><b style="width:18.5px;margin-left:-0.2px;transform:scaleX(0.892)">0</b></i></div>
<div class="c" style="left:885px;top:276px;"><span class="cm"># <span style="letter-spacing:3px">调试</span>-<span style="letter-spacing:3px">断点，单步调试</span></span></div>
<div class="c" style="left:885px;top:364px;">i = <span class="n">0</span>  <span class="iv">i: 0</span></div>
<div class="c" style="left:885px;top:408px;">mySum = <span class="n">0</span>  <span class="iv">mySum: 0</span></div>
<div class="c" style="left:885px;top:452px;"><span class="k">while</span> i &lt; <span class="n">5</span>:</div>
<div class="c" style="left:885px;top:496px;">    mySum += i</div>
<div class="c" style="left:885px;top:540px;">    i += <span class="n">1</span></div>
<div class="c" style="left:885px;top:628px;"><span class="b">print</span>(<span class="st">'mySum = {}'</span>.format(mySum))</div>
<svg style="left:788px;top:445px;" width="37" height="37" viewBox="0 0 37 37"><defs><radialGradient id="bp" cx="0.4" cy="0.35" r="0.7"><stop offset="0" stop-color="#f08a7a"/><stop offset="1" stop-color="#d9503e"/></radialGradient></defs><circle cx="18.5" cy="18.5" r="18" fill="url(#bp)"/></svg>
<svg style="left:857px;top:452px;" width="20" height="30" viewBox="0 0 20 30"><path d="M1 1H19V19L10 28L1 19Z" fill="#2b2b2b" stroke="#5a5a5a" stroke-width="2"/><path d="M5 10H15" stroke="#888" stroke-width="2"/></svg>
<svg style="left:857px;top:540px;" width="20" height="30" viewBox="0 0 20 30"><path d="M1 29H19V11L10 2L1 11Z" fill="#2b2b2b" stroke="#5a5a5a" stroke-width="2"/><path d="M5 19H15" stroke="#888" stroke-width="2"/></svg>
<div class="a" style="left:855px;top:429px;width:830px;height:73px;border:1px solid #ff3b3b"></div>
<svg style="left:2690px;top:270px;" width="40" height="32" viewBox="0 0 40 32"><path d="M8 10.5L19.5 22L36 6.5" fill="none" stroke="#62a550" stroke-width="8.5"/></svg>
<div class="a" style="left:2706px;top:317px;width:26px;height:431px;background:#7d7d7d;border-radius:3px;box-shadow:0 0 2px #1a1a1a"></div>
<div class="a" style="left:2706px;top:443px;width:26px;height:44px;background:#7b8b9c;"></div>
<div class="a" style="left:704px;top:829px;width:2032px;height:58px;background:#313335;"></div>
<div class="a" style="left:704px;top:829px;width:2032px;height:2px;background:#3b3d3f;"></div>
<div class="t" style="left:884px;top:838px;color:#bbbbbb;"><i><b style="width:26.7px;margin-left:-4.4px;transform:scaleX(0.618)">w</b></i><i><b style="width:18.5px;margin-left:-0.2px;transform:scaleX(0.892)">h</b></i><i>i</i><i>l</i><i>e</i><i> </i><i>i</i><i> </i><i><b style="width:20.9px;margin-left:-1.4px;transform:scaleX(0.791)">&lt;</b></i><i> </i><i><b style="width:18.5px;margin-left:-0.2px;transform:scaleX(0.892)">5</b></i></div>
<div class="a" style="left:62px;top:887px;width:2674px;height:2px;background:#2b2b2b;"></div>
<div class="a" style="left:62px;top:889px;width:2674px;height:68px;background:#3b4754;"></div>
<div class="a" style="left:204px;top:889px;width:335px;height:68px;background:#313a44;"></div>
<div class="a" style="left:62px;top:957px;width:2674px;height:2px;background:#2f3133;"></div>
<div class="t" style="left:77px;top:902px;color:#bbbbbb;"><i><b style="width:26.7px;margin-left:-4.4px;transform:scaleX(0.618)">D</b></i><i>e</i><i><b style="width:18.5px;margin-left:-0.2px;transform:scaleX(0.892)">b</b></i><i><b style="width:18.5px;margin-left:-0.2px;transform:scaleX(0.892)">u</b></i><i><b style="width:18.5px;margin-left:-0.2px;transform:scaleX(0.892)">g</b></i><i>:</i></div>
<svg style="left:242px;top:901px;" width="44" height="44" viewBox="0 0 44 44"><g transform="scale(1.22)"><path d="M17 1C9 1 9 4 9 6V10H18V12H5C2 12 0 14 0 19C0 24 2 27 5 27H8V22C8 19 10 17 13 17H22C24 17 26 15 26 13V6C26 3 23 1 17 1Z" fill="#4a9fd8"/><circle cx="13" cy="5" r="1.6" fill="#3c3f41"/><path d="M19 35C27 35 27 32 27 30V26H18V24H31C34 24 36 22 36 17C36 12 34 9 31 9H28V14C28 17 26 19 23 19H14C12 19 10 21 10 23V30C10 33 13 35 19 35Z" fill="#f2c30f"/><circle cx="23" cy="31" r="1.6" fill="#3c3f41"/><circle cx="33" cy="33" r="6" fill="#1a1a1a"/><circle cx="33" cy="33" r="4.8" fill="#10e010"/></g></svg>
<div class="t" style="left:296px;top:902px;color:#bbbbbb;"><i><b style="width:18.5px;margin-left:-0.2px;transform:scaleX(0.892)">4</b></i><i style="text-align:left">.</i><i><b style="width:18.5px;margin-left:-0.2px;transform:scaleX(0.892)">1</b></i><i><b style="width:18.5px;margin-left:-0.2px;transform:scaleX(0.892)">6</b></i><i><b style="width:18.5px;margin-left:-0.2px;transform:scaleX(0.892)">–</b></i><i><b style="width:18.5px;margin-left:-0.2px;transform:scaleX(0.892)">d</b></i><i>e</i><i><b style="width:18.5px;margin-left:-0.2px;transform:scaleX(0.892)">b</b></i><i><b style="width:18.5px;margin-left:-0.2px;transform:scaleX(0.892)">u</b></i><i><b style="width:18.5px;margin-left:-0.2px;transform:scaleX(0.892)">g</b></i></div>
<svg style="left:495px;top:916px;" width="21" height="21" viewBox="0 0 21 21"><path d="M1 1L20 20M20 1L1 20" stroke="#62666a" stroke-width="3"/></svg>
<svg style="left:2602px;top:904px;" width="60" height="38" viewBox="0 0 60 38"><circle cx="19.0" cy="19.0" r="13.3" fill="#999"/><rect x="15.6" y="0" width="6.8" height="38" fill="#999" transform="rotate(0 19.0 19.0)"/><rect x="15.6" y="0" width="6.8" height="38" fill="#999" transform="rotate(45 19.0 19.0)"/><rect x="15.6" y="0" width="6.8" height="38" fill="#999" transform="rotate(90 19.0 19.0)"/><rect x="15.6" y="0" width="6.8" height="38" fill="#999" transform="rotate(135 19.0 19.0)"/><circle cx="19.0" cy="19.0" r="5.3" fill="#3b4754"/><path d="M44 16.0H58L51 24.5Z" fill="#999"/></svg>
<svg style="left:2683px;top:905px;" width="34" height="36" viewBox="0 0 34 36"><rect x="9.7" y="0" width="3" height="16" fill="#999"/><path d="M3.5 15.2H18L10.75 23.2Z" fill="#999"/><rect x="0.5" y="27" width="33" height="9" fill="#999"/><rect x="18" y="30" width="13" height="3" fill="#3b4754"/></svg>
<div class="a" style="left:62px;top:959px;width:97px;height:648px;background:#3c3f41;"></div>
<div class="a" style="left:157px;top:959px;width:2px;height:648px;background:#4a4c4e;"></div>
<svg style="left:88px;top:987px;" width="44" height="43" viewBox="0 0 44 43"><defs><linearGradient id="gg" x1="0" y1="0" x2="0" y2="1"><stop offset="0" stop-color="#5ccd6a"/><stop offset="1" stop-color="#22a33b"/></linearGradient></defs><path d="M21 39A17 17 0 1 1 24 9" fill="none" stroke="url(#gg)" stroke-width="7"/><path d="M22 0L40 9L22 18Z" fill="#4cc25c"/><rect x="22" y="22" width="21" height="21" fill="#a8a8a8"/></svg>
<div class="a" style="left:78px;top:1056px;width:62px;height:2px;background:repeating-linear-gradient(90deg,#8a8a8a 0 2px,transparent 2px 6.2px)"></div>
<svg style="left:90px;top:1083px;" width="42" height="40" viewBox="0 0 42 40"><g fill="#9a9a9a"><rect x="0" y="1" width="11" height="3"/><rect x="0" y="7" width="11" height="3"/><rect x="0" y="13" width="11" height="3"/><rect x="0" y="19" width="11" height="3"/><rect x="0" y="25" width="11" height="3"/><rect x="0" y="31" width="11" height="3"/><rect x="0" y="36" width="11" height="3"/></g><path d="M12 0L42 20L12 40Z" fill="url(#gg)"/></svg>
<svg style="left:95px;top:1161px;" width="31" height="36" viewBox="0 0 31 36"><rect x="0" y="0" width="12" height="36" fill="#505356"/><rect x="18" y="0" width="12" height="36" fill="#505356"/></svg>
<svg style="left:92px;top:1237px;" width="36" height="36" viewBox="0 0 36 36"><defs><linearGradient id="sg2" x1="0" y1="0" x2="0" y2="1"><stop offset="0" stop-color="#e8887a"/><stop offset="1" stop-color="#d9604e"/></linearGradient></defs><rect width="36" height="36" fill="url(#sg2)"/></svg>
<div class="a" style="left:78px;top:1303px;width:62px;height:2px;background:repeating-linear-gradient(90deg,#8a8a8a 0 2px,transparent 2px 6.2px)"></div>
<svg style="left:88px;top:1326px;" width="48" height="46" viewBox="0 0 48 46"><circle cx="14.5" cy="14" r="13.5" fill="#e06a58"/><circle cx="14.5" cy="31.5" r="13.5" fill="#de5d4b" stroke="#c44d3d" stroke-width="1"/><circle cx="37" cy="17" r="5.5" fill="#a0a0a0" stroke="#707070" stroke-width="1.5"/><circle cx="37" cy="32" r="5.5" fill="#a0a0a0" stroke="#707070" stroke-width="1.5"/></svg>
<svg style="left:89px;top:1404px;" width="42" height="42" viewBox="0 0 42 42"><circle cx="21" cy="21" r="15.5" fill="#e26854"/><circle cx="21" cy="21" r="19" fill="none" stroke="#a0a0a0" stroke-width="3"/><path d="M8 34L34 8" stroke="#a0a0a0" stroke-width="3.5"/></svg>
<div class="a" style="left:78px;top:1473px;width:62px;height:2px;background:repeating-linear-gradient(90deg,#8a8a8a 0 2px,transparent 2px 6.2px)"></div>
<svg style="left:89px;top:1498px;" width="42" height="42" viewBox="0 0 42 42"><rect x="0" y="0" width="24" height="21" fill="#3d8fd0"/><rect x="4" y="6" width="16" height="10" fill="#7fb1d6" stroke="#2b2b2b" stroke-width="1.2"/><rect x="27" y="0" width="15" height="21" fill="none" stroke="#8c8c8c" stroke-width="3"/><rect x="32" y="6" width="5" height="10" fill="#707070"/><rect x="1.5" y="25" width="39" height="15" fill="none" stroke="#8c8c8c" stroke-width="3"/><rect x="6" y="29" width="30" height="7" fill="#707070"/></svg>
<svg style="left:100px;top:1567px;" width="22" height="17" viewBox="0 0 22 17"><path d="M1 1L8 8.5L1 16M13 1L20 8.5L13 16" fill="none" stroke="#a8a8a8" stroke-width="3"/></svg>
<div class="a" style="left:159px;top:959px;width:162px;height:76px;background:#4e5254;"></div>
<div class="a" style="left:159px;top:1027px;width:2577px;height:8px;background:#4e5254;"></div>
<div class="t v" style="left:173px;top:978px;color:#bbbbbb;"><i><b style="width:26.7px;margin-left:-4.9px;transform:scaleX(0.618)">D</b></i><i>e</i><i><b style="width:18.5px;margin-left:-0.8px;transform:scaleX(0.892)">b</b></i><i><b style="width:18.5px;margin-left:-0.8px;transform:scaleX(0.892)">u</b></i><i><b style="width:18.5px;margin-left:-0.8px;transform:scaleX(0.892)">g</b></i><i><b style="width:18.5px;margin-left:-0.8px;transform:scaleX(0.892)">g</b></i><i>e</i><i>r</i></div>
<svg style="left:336px;top:974px;" width="45" height="45" viewBox="0 0 45 45"><rect x="0" y="0" width="43" height="43" fill="#8c8c8c"/><rect x="0" y="0" width="43" height="8" fill="#4a9fd8"/><rect x="6" y="10" width="31" height="27" fill="#3c3f41"/><rect x="8" y="12" width="27" height="23" fill="#7fb1d6"/><g stroke="#2b4a60" stroke-width="1.3"><path d="M12 17H30M12 21H30M12 25H30M12 29H25"/></g><circle cx="34" cy="34" r="10.5" fill="#e8a33e"/><path d="M34 27V39M29 35L34 40L39 35" fill="none" stroke="#6a4a14" stroke-width="2"/></svg>
<div class="t v" style="left:386px;top:978px;color:#bbbbbb;"><i><b style="width:24.7px;margin-left:-3.8px;transform:scaleX(0.669)">C</b></i><i><b style="width:18.5px;margin-left:-0.8px;transform:scaleX(0.892)">o</b></i><i><b style="width:18.5px;margin-left:-0.8px;transform:scaleX(0.892)">n</b></i><i>s</i><i><b style="width:18.5px;margin-left:-0.8px;transform:scaleX(0.892)">o</b></i><i>l</i><i>e</i></div>
<svg style="left:522px;top:978px;" width="34" height="24" viewBox="0 0 34 24"><rect x="0" y="12.5" width="12.5" height="3" fill="#999"/><path d="M12 6.5L20.5 14L12 21.5Z" fill="#999"/><rect x="24" y="0.7" width="9" height="9" fill="#999"/></svg>
<div class="a" style="left:562px;top:959px;width:2px;height:68px;background:#505356;"></div>
<svg style="left:580px;top:976px;" width="44" height="43" viewBox="0 0 44 43"><path d="M0 0L19 16.5L0 33Z" fill="#e0604e"/><rect x="22" y="9" width="21" height="4" fill="#8c8c8c"/><rect x="22" y="18" width="21" height="6" fill="#8c8c8c"/><rect x="10" y="27" width="33" height="6" fill="#4a88b5"/><rect x="10" y="36" width="33" height="6" fill="#4a88b5"/></svg>
<div class="a" style="left:650px;top:967px;width:2px;height:56px;background:repeating-linear-gradient(#8a8a8a 0 2px,transparent 2px 6px)"></div>
<svg style="left:675px;top:976px;" width="42" height="42" viewBox="0 0 42 42"><rect x="0" y="0" width="42" height="6" fill="#9a9a9a"/><rect x="15" y="8" width="12" height="10" fill="#3d95d0"/><path d="M6 17H36L21 34Z" fill="#3d95d0"/><rect x="0" y="36" width="42" height="6" fill="#9a9a9a"/></svg>
<svg style="left:751px;top:976px;" width="42" height="42" viewBox="0 0 42 42"><path d="M0 8L8 0L26 18L33 11V33H11L18 26Z" fill="#3d95d0"/><rect x="0" y="36" width="42" height="6" fill="#9a9a9a"/></svg>
<svg style="left:827px;top:978px;" width="42" height="40" viewBox="0 0 42 40"><rect x="0" y="10" width="3" height="24" fill="#9a9a9a"/><rect x="6" y="15" width="3" height="19" fill="#9a9a9a"/><rect x="12" y="18" width="3" height="16" fill="#9a9a9a"/><path d="M15 5L21 0L35 13L40 7V27H20L26 21Z" fill="#38b8e8"/><rect x="0" y="35" width="42" height="5" fill="#9aa4ac"/></svg>
<svg style="left:902px;top:979px;" width="43" height="39" viewBox="0 0 43 39"><path d="M0 3C12 0 22 8 27 16L33 10V30H14L20 23C15 15 8 8 0 3Z" fill="#555759"/><rect x="1" y="33" width="42" height="6" fill="#555759"/></svg>
<svg style="left:979px;top:976px;" width="42" height="42" viewBox="0 0 42 42"><path d="M6 26L24 8L17 1H39V23L32 16L14 34Z" fill="#3d95d0"/><rect x="0" y="36" width="42" height="6" fill="#9a9a9a"/></svg>
<svg style="left:1055px;top:976px;" width="43" height="42" viewBox="0 0 43 42"><path d="M0 6L6 0L17 11L24 4V24H4L11 17Z" fill="#3d95d0"/><path d="M26 16H42M26 42H42M34 16V42" stroke="#c8c8c8" stroke-width="3"/></svg>
<div class="a" style="left:1124px;top:967px;width:2px;height:56px;background:repeating-linear-gradient(#8a8a8a 0 2px,transparent 2px 6px)"></div>
<svg style="left:1152px;top:978px;" width="39" height="37" viewBox="0 0 39 37"><rect x="0" y="0" width="39" height="37" fill="#8c8c8c"/><rect x="3" y="3" width="33" height="31" fill="#3c3f41"/><rect x="4" y="4" width="31" height="8" fill="#4a9fd8"/><rect x="7" y="6" width="25" height="4" fill="#2f6a94"/><g fill="#9a9a9a"><rect x="6" y="16" width="6" height="4"/><rect x="15" y="16" width="6" height="4"/><rect x="6" y="23" width="6" height="4"/><rect x="15" y="23" width="6" height="4"/><rect x="6" y="29" width="6" height="3"/><rect x="15" y="29" width="6" height="3"/></g><rect x="24" y="16" width="10" height="5" fill="#e0604e"/><rect x="24" y="24" width="10" height="5" fill="#22c222"/></svg>
<div class="a" style="left:159px;top:1036px;width:1005px;height:65px;background:#404c5e;"></div>
<div class="a" style="left:159px;top:1101px;width:1005px;height:2px;background:#2f3133;"></div>
<svg style="left:172px;top:1045px;" width="40" height="44" viewBox="0 0 40 44"><rect x="1.5" y="1.5" width="27" height="27" fill="none" stroke="#8c8c8c" stroke-width="2.5"/><rect x="6.5" y="6.5" width="27" height="27" fill="#404c5e" stroke="#8c8c8c" stroke-width="2.5"/><rect x="11.5" y="12.5" width="27" height="30" fill="#3a6f96" stroke="#8c8c8c" stroke-width="2.5"/><path d="M24 18L18 22L24 25M27 29L33 33L27 37" fill="none" stroke="#e8e8e8" stroke-width="2.2"/></svg>
<div class="t v" style="left:223px;top:1050px;color:#bbbbbb;"><i><b style="width:20.6px;margin-left:-1.8px;transform:scaleX(0.802)">F</b></i><i>r</i><i>a</i><i><b style="width:28.8px;margin-left:-5.9px;transform:scaleX(0.573)">m</b></i><i>e</i><i>s</i></div>
<svg style="left:1124px;top:1055px;" width="34" height="24" viewBox="0 0 34 24"><rect x="0" y="12.5" width="12.5" height="3" fill="#999"/><path d="M12 6.5L20.5 14L12 21.5Z" fill="#999"/><rect x="24" y="0.7" width="9" height="9" fill="#999"/></svg>
<div class="a" style="left:170px;top:1114px;width:794px;height:76px;border:2px solid #5a5d5f;border-radius:6px"></div>
<div class="a" style="left:902px;top:1116px;width:2px;height:72px;background:#5a5d5f;"></div>
<svg style="left:920px;top:1145px;" width="23" height="18" viewBox="0 0 23 18"><path d="M0 0H23L11.5 18Z" fill="#b8b8b8"/></svg>
<svg style="left:190px;top:1130px;" width="46" height="46" viewBox="0 0 46 46"><rect x="0" y="0" width="30" height="5" fill="#8c8c8c"/><rect x="0" y="39" width="30" height="5" fill="#8c8c8c"/><rect x="4" y="5" width="22" height="34" fill="#d9a72e"/><g stroke="#8a6a1a" stroke-width="1.3"><path d="M4 9H26M4 13H26M4 17H26M4 21H26M4 25H26M4 29H26M4 33H26"/></g><circle cx="32" cy="32" r="12" fill="#e0523f"/></svg>
<div class="t" style="left:241px;top:1131px;color:#bbbbbb;"><i><b style="width:32.9px;margin-left:-7.4px;transform:scaleX(0.502)">M</b></i><i>a</i><i>i</i><i><b style="width:18.5px;margin-left:-0.2px;transform:scaleX(0.892)">n</b></i><i><b style="width:22.6px;margin-left:-2.3px;transform:scaleX(0.730)">T</b></i><i><b style="width:18.5px;margin-left:-0.2px;transform:scaleX(0.892)">h</b></i><i>r</i><i>e</i><i>a</i><i><b style="width:18.5px;margin-left:-0.2px;transform:scaleX(0.892)">d</b></i></div>
<div class="a" style="left:994px;top:1122px;width:2px;height:64px;background:repeating-linear-gradient(#8a8a8a 0 2px,transparent 2px 6px)"></div>
<svg style="left:1022px;top:1132px;" width="35" height="37" viewBox="0 0 35 37"><path d="M17.5 0L35 17H24V37H11V17H0Z" fill="#56585a"/></svg>
<svg style="left:1098px;top:1132px;" width="35" height="37" viewBox="0 0 35 37"><path d="M11 0H24V20H35L17.5 37L0 20H11Z" fill="#3d95d0"/></svg>
<div class="a" style="left:159px;top:1199px;width:1005px;height:4px;background:#2f3133;"></div>
<div class="a" style="left:159px;top:1203px;width:1005px;height:64px;background:#4b6eaf;"></div>
<div class="a" style="left:159px;top:1267px;width:1005px;height:256px;background:#4a463a;"></div>
<svg style="left:187px;top:1214px;" width="40" height="44" viewBox="0 0 40 44"><rect x="1.5" y="1.5" width="27" height="27" fill="none" stroke="#8c8c8c" stroke-width="2.5"/><rect x="6.5" y="6.5" width="27" height="27" fill="#4b6eaf" stroke="#8c8c8c" stroke-width="2.5"/><rect x="11.5" y="12.5" width="27" height="30" fill="#3a6f96" stroke="#8c8c8c" stroke-width="2.5"/><path d="M24 18L18 22L24 25M27 29L33 33L27 37" fill="none" stroke="#e8e8e8" stroke-width="2.2"/></svg>
<div class="t" style="left:241px;top:1221px;color:#c8c8c8;"><i><b style="width:20.9px;margin-left:-1.4px;transform:scaleX(0.791)">&lt;</b></i><i><b style="width:28.8px;margin-left:-5.4px;transform:scaleX(0.573)">m</b></i><i><b style="width:18.5px;margin-left:-0.2px;transform:scaleX(0.892)">o</b></i><i><b style="width:18.5px;margin-left:-0.2px;transform:scaleX(0.892)">d</b></i><i><b style="width:18.5px;margin-left:-0.2px;transform:scaleX(0.892)">u</b></i><i>l</i><i>e</i><i><b style="width:20.9px;margin-left:-1.4px;transform:scaleX(0.791)">&gt;</b></i><i style="text-align:left">,</i><i> </i><i><b style="width:18.5px;margin-left:-0.2px;transform:scaleX(0.892)">4</b></i><i style="text-align:left">.</i><i><b style="width:18.5px;margin-left:-0.2px;transform:scaleX(0.892)">1</b></i><i><b style="width:18.5px;margin-left:-0.2px;transform:scaleX(0.892)">6</b></i><i><b style="width:18.5px;margin-left:-0.2px;transform:scaleX(0.892)">–</b></i><i><b style="width:18.5px;margin-left:-0.2px;transform:scaleX(0.892)">d</b></i><i>e</i><i><b style="width:18.5px;margin-left:-0.2px;transform:scaleX(0.892)">b</b></i><i><b style="width:18.5px;margin-left:-0.2px;transform:scaleX(0.892)">u</b></i><i><b style="width:18.5px;margin-left:-0.2px;transform:scaleX(0.892)">g</b></i><i style="text-align:left">.</i><i><b style="width:18.5px;margin-left:-0.2px;transform:scaleX(0.892)">p</b></i><i><b style="width:18.5px;margin-left:-0.2px;transform:scaleX(0.892)">y</b></i><i>:</i><i><b style="width:18.5px;margin-left:-0.2px;transform:scaleX(0.892)">5</b></i></div>
<svg style="left:187px;top:1278px;" width="40" height="44" viewBox="0 0 40 44"><rect x="1.5" y="1.5" width="27" height="27" fill="none" stroke="#8c8c8c" stroke-width="2.5"/><rect x="6.5" y="6.5" width="27" height="27" fill="#4a463a" stroke="#8c8c8c" stroke-width="2.5"/><rect x="11.5" y="12.5" width="27" height="30" fill="#3a6f96" stroke="#8c8c8c" stroke-width="2.5"/><path d="M24 18L18 22L24 25M27 29L33 33L27 37" fill="none" stroke="#e8e8e8" stroke-width="2.2"/></svg>
<div class="t" style="left:241px;top:1285px;color:#9d9a8e;"><i>e</i><i><b style="width:18.5px;margin-left:-0.2px;transform:scaleX(0.892)">x</b></i><i>e</i><i>c</i><i>f</i><i>i</i><i>l</i><i>e</i><i style="text-align:left">,</i><i> </i><i><b style="width:18.5px;margin-left:-0.2px;transform:scaleX(0.892)">_</b></i><i><b style="width:18.5px;margin-left:-0.2px;transform:scaleX(0.892)">p</b></i><i><b style="width:18.5px;margin-left:-0.2px;transform:scaleX(0.892)">y</b></i><i><b style="width:18.5px;margin-left:-0.2px;transform:scaleX(0.892)">d</b></i><i>e</i><i><b style="width:18.5px;margin-left:-0.2px;transform:scaleX(0.892)">v</b></i><i><b style="width:18.5px;margin-left:-0.2px;transform:scaleX(0.892)">_</b></i><i>e</i><i><b style="width:18.5px;margin-left:-0.2px;transform:scaleX(0.892)">x</b></i><i>e</i><i>c</i><i>f</i><i>i</i><i>l</i><i>e</i><i style="text-align:left">.</i><i><b style="width:18.5px;margin-left:-0.2px;transform:scaleX(0.892)">p</b></i><i><b style="width:18.5px;margin-left:-0.2px;transform:scaleX(0.892)">y</b></i><i>:</i><i><b style="width:18.5px;margin-left:-0.2px;transform:scaleX(0.892)">1</b></i><i><b style="width:18.5px;margin-left:-0.2px;transform:scaleX(0.892)">8</b></i></div>
<svg style="left:187px;top:1342px;" width="40" height="44" viewBox="0 0 40 44"><rect x="1.5" y="1.5" width="27" height="27" fill="none" stroke="#8c8c8c" stroke-width="2.5"/><rect x="6.5" y="6.5" width="27" height="27" fill="#4a463a" stroke="#8c8c8c" stroke-width="2.5"/><rect x="11.5" y="12.5" width="27" height="30" fill="#3a6f96" stroke="#8c8c8c" stroke-width="2.5"/><path d="M24 18L18 22L24 25M27 29L33 33L27 37" fill="none" stroke="#e8e8e8" stroke-width="2.2"/></svg>
<div class="t" style="left:241px;top:1349px;color:#9d9a8e;"><i>r</i><i><b style="width:18.5px;margin-left:-0.2px;transform:scaleX(0.892)">u</b></i><i><b style="width:18.5px;margin-left:-0.2px;transform:scaleX(0.892)">n</b></i><i style="text-align:left">,</i><i> </i><i><b style="width:18.5px;margin-left:-0.2px;transform:scaleX(0.892)">p</b></i><i><b style="width:18.5px;margin-left:-0.2px;transform:scaleX(0.892)">y</b></i><i><b style="width:18.5px;margin-left:-0.2px;transform:scaleX(0.892)">d</b></i><i>e</i><i><b style="width:18.5px;margin-left:-0.2px;transform:scaleX(0.892)">v</b></i><i><b style="width:18.5px;margin-left:-0.2px;transform:scaleX(0.892)">d</b></i><i style="text-align:left">.</i><i><b style="width:18.5px;margin-left:-0.2px;transform:scaleX(0.892)">p</b></i><i><b style="width:18.5px;margin-left:-0.2px;transform:scaleX(0.892)">y</b></i><i>:</i><i><b style="width:18.5px;margin-left:-0.2px;transform:scaleX(0.892)">1</b></i><i><b style="width:18.5px;margin-left:-0.2px;transform:scaleX(0.892)">0</b></i><i><b style="width:18.5px;margin-left:-0.2px;transform:scaleX(0.892)">6</b></i><i><b style="width:18.5px;margin-left:-0.2px;transform:scaleX(0.892)">8</b></i></div>
<svg style="left:187px;top:1406px;" width="40" height="44" viewBox="0 0 40 44"><rect x="1.5" y="1.5" width="27" height="27" fill="none" stroke="#8c8c8c" stroke-width="2.5"/><rect x="6.5" y="6.5" width="27" height="27" fill="#4a463a" stroke="#8c8c8c" stroke-width="2.5"/><rect x="11.5" y="12.5" width="27" height="30" fill="#3a6f96" stroke="#8c8c8c" stroke-width="2.5"/><path d="M24 18L18 22L24 25M27 29L33 33L27 37" fill="none" stroke="#e8e8e8" stroke-width="2.2"/></svg>
<div class="t" style="left:241px;top:1413px;color:#9d9a8e;"><i><b style="width:28.8px;margin-left:-5.4px;transform:scaleX(0.573)">m</b></i><i>a</i><i>i</i><i><b style="width:18.5px;margin-left:-0.2px;transform:scaleX(0.892)">n</b></i><i style="text-align:left">,</i><i> </i><i><b style="width:18.5px;margin-left:-0.2px;transform:scaleX(0.892)">p</b></i><i><b style="width:18.5px;margin-left:-0.2px;transform:scaleX(0.892)">y</b></i><i><b style="width:18.5px;margin-left:-0.2px;transform:scaleX(0.892)">d</b></i><i>e</i><i><b style="width:18.5px;margin-left:-0.2px;transform:scaleX(0.892)">v</b></i><i><b style="width:18.5px;margin-left:-0.2px;transform:scaleX(0.892)">d</b></i><i style="text-align:left">.</i><i><b style="width:18.5px;margin-left:-0.2px;transform:scaleX(0.892)">p</b></i><i><b style="width:18.5px;margin-left:-0.2px;transform:scaleX(0.892)">y</b></i><i>:</i><i><b style="width:18.5px;margin-left:-0.2px;transform:scaleX(0.892)">1</b></i><i><b style="width:18.5px;margin-left:-0.2px;transform:scaleX(0.892)">6</b></i><i><b style="width:18.5px;margin-left:-0.2px;transform:scaleX(0.892)">5</b></i><i><b style="width:18.5px;margin-left:-0.2px;transform:scaleX(0.892)">8</b></i></div>
<svg style="left:187px;top:1470px;" width="40" height="44" viewBox="0 0 40 44"><rect x="1.5" y="1.5" width="27" height="27" fill="none" stroke="#8c8c8c" stroke-width="2.5"/><rect x="6.5" y="6.5" width="27" height="27" fill="#4a463a" stroke="#8c8c8c" stroke-width="2.5"/><rect x="11.5" y="12.5" width="27" height="30" fill="#3a6f96" stroke="#8c8c8c" stroke-width="2.5"/><path d="M24 18L18 22L24 25M27 29L33 33L27 37" fill="none" stroke="#e8e8e8" stroke-width="2.2"/></svg>
<div class="t" style="left:241px;top:1477px;color:#9d9a8e;"><i><b style="width:20.9px;margin-left:-1.4px;transform:scaleX(0.791)">&lt;</b></i><i><b style="width:28.8px;margin-left:-5.4px;transform:scaleX(0.573)">m</b></i><i><b style="width:18.5px;margin-left:-0.2px;transform:scaleX(0.892)">o</b></i><i><b style="width:18.5px;margin-left:-0.2px;transform:scaleX(0.892)">d</b></i><i><b style="width:18.5px;margin-left:-0.2px;transform:scaleX(0.892)">u</b></i><i>l</i><i>e</i><i><b style="width:20.9px;margin-left:-1.4px;transform:scaleX(0.791)">&gt;</b></i><i style="text-align:left">,</i><i> </i><i><b style="width:18.5px;margin-left:-0.2px;transform:scaleX(0.892)">p</b></i><i><b style="width:18.5px;margin-left:-0.2px;transform:scaleX(0.892)">y</b></i><i><b style="width:18.5px;margin-left:-0.2px;transform:scaleX(0.892)">d</b></i><i>e</i><i><b style="width:18.5px;margin-left:-0.2px;transform:scaleX(0.892)">v</b></i><i><b style="width:18.5px;margin-left:-0.2px;transform:scaleX(0.892)">d</b></i><i style="text-align:left">.</i><i><b style="width:18.5px;margin-left:-0.2px;transform:scaleX(0.892)">p</b></i><i><b style="width:18.5px;margin-left:-0.2px;transform:scaleX(0.892)">y</b></i><i>:</i><i><b style="width:18.5px;margin-left:-0.2px;transform:scaleX(0.892)">1</b></i><i><b style="width:18.5px;margin-left:-0.2px;transform:scaleX(0.892)">6</b></i><i><b style="width:18.5px;margin-left:-0.2px;transform:scaleX(0.892)">6</b></i><i><b style="width:18.5px;margin-left:-0.2px;transform:scaleX(0.892)">4</b></i></div>
<div class="a" style="left:68px;top:954px;width:1091px;height:345px;border:1px solid #ff3b3b"></div>
<div class="a" style="left:1164px;top:1036px;width:2px;height:571px;background:#4a4c4e;"></div>
<div class="a" style="left:1166px;top:1036px;width:1570px;height:65px;background:#404c5e;"></div>
<div class="a" style="left:1166px;top:1101px;width:1570px;height:2px;background:#2f3133;"></div>
<svg style="left:1180px;top:1050px;" width="36" height="36" viewBox="0 0 36 36"><g fill="#d9a343"><rect x="0" y="0" width="36" height="9"/><rect x="0" y="13" width="36" height="9"/><rect x="0" y="26" width="36" height="10"/></g></svg>
<div class="t v" style="left:1229px;top:1050px;color:#bbbbbb;"><i><b style="width:26.7px;margin-left:-4.9px;transform:scaleX(0.618)">V</b></i><i>a</i><i>r</i><i>i</i><i>a</i><i><b style="width:18.5px;margin-left:-0.8px;transform:scaleX(0.892)">b</b></i><i>l</i><i>e</i><i>s</i></div>
<svg style="left:2695px;top:1055px;" width="34" height="24" viewBox="0 0 34 24"><rect x="0" y="12.5" width="12.5" height="3" fill="#999"/><path d="M12 6.5L20.5 14L12 21.5Z" fill="#999"/><rect x="24" y="0.7" width="9" height="9" fill="#999"/></svg>
<div class="a" style="left:1243px;top:1103px;width:3px;height:504px;background:#2f3133;"></div>
<svg style="left:1181px;top:1117px;" width="55" height="48" viewBox="0 0 55 48"><path d="M13 0V26M0 13H26" stroke="#3bb04a" stroke-width="6"/><circle cx="10" cy="37" r="7" fill="#4a9a4a"/><circle cx="24" cy="38" r="7" fill="#4a9a4a"/><path d="M24 38C30 30 32 22 40 18" fill="none" stroke="#9a9a9a" stroke-width="2.5"/></svg>
<div class="a" style="left:1186px;top:1214px;width:34px;height:4px;background:#56585a;"></div>
<svg style="left:1186px;top:1275px;" width="35" height="37" viewBox="0 0 35 37"><path d="M17.5 0L35 17H24V37H11V17H0Z" fill="#56585a"/></svg>
<svg style="left:1186px;top:1351px;" width="35" height="37" viewBox="0 0 35 37"><path d="M11 0H24V20H35L17.5 37L0 20H11Z" fill="#56585a"/></svg>
<svg style="left:1186px;top:1424px;" width="42" height="46" viewBox="0 0 42 46"><path d="M0 0H24V6H6V38H0Z" fill="#56585a"/><rect x="10" y="10" width="32" height="36" fill="#56585a"/><g stroke="#3c3f41" stroke-width="2"><path d="M16 22H36M16 28H36M16 34H36M16 40H36"/></g></svg>
<div class="a" style="left:1166px;top:1485px;width:76px;height:72px;background:#4a4d50;border:2px solid #5e6163;border-radius:3px"></div>
<svg style="left:1184px;top:1500px;" width="42" height="42" viewBox="0 0 42 42"><rect x="0" y="0" width="42" height="36" fill="#8c8c8c"/><rect x="0" y="0" width="42" height="7" fill="#4a9fd8"/><rect x="3" y="9" width="36" height="24" fill="#3c3f41"/><path d="M6 26C10 14 14 12 18 20M22 26C26 14 30 12 34 20" fill="none" stroke="#9a9a9a" stroke-width="2"/><circle cx="8" cy="34" r="7" fill="#4a9a4a"/><circle cx="20" cy="35" r="7" fill="#4a9a4a"/></svg>
<svg style="left:1313px;top:1117px;" width="37" height="36" viewBox="0 0 37 36"><rect x="1.5" y="1.5" width="34" height="33" fill="#2d5775" stroke="#9a9a9a" stroke-width="3"/><text x="18.5" y="17" text-anchor="middle" font-family="Liberation Sans" font-weight="bold" font-size="15.5" fill="#c8c8c8">10</text><text x="18.5" y="31.5" text-anchor="middle" font-family="Liberation Sans" font-weight="bold" font-size="15.5" fill="#c8c8c8">01</text></svg>
<div class="t" style="left:1366px;top:1120px;color:#bbbbbb;"><span style="color:#5394ec"><i>i</i><i><b style="width:20.9px;margin-left:-1.4px;transform:scaleX(0.791)">&lt;</b></i><i><b style="width:18.5px;margin-left:-0.2px;transform:scaleX(0.892)">5</b></i></span><i> </i><i><b style="width:20.9px;margin-left:-1.4px;transform:scaleX(0.791)">=</b></i><i> </i><span style="color:#707070"><i><b style="width:17.8px;margin-left:0.1px;transform:scaleX(0.929)">{</b></i><i><b style="width:18.5px;margin-left:-0.2px;transform:scaleX(0.892)">b</b></i><i><b style="width:18.5px;margin-left:-0.2px;transform:scaleX(0.892)">o</b></i><i><b style="width:18.5px;margin-left:-0.2px;transform:scaleX(0.892)">o</b></i><i>l</i><i><b style="width:17.8px;margin-left:0.1px;transform:scaleX(0.929)">}</b></i></span><i> </i><i><b style="width:22.6px;margin-left:-2.3px;transform:scaleX(0.730)">T</b></i><i>r</i><i><b style="width:18.5px;margin-left:-0.2px;transform:scaleX(0.892)">u</b></i><i>e</i></div>
<svg style="left:1257px;top:1186px;" width="25" height="27" viewBox="0 0 25 27"><path d="M0 0L25 13.5L0 27Z" fill="#b0b0b0"/></svg>
<svg style="left:1313px;top:1181px;" width="37" height="36" viewBox="0 0 37 36"><rect x="0" y="0" width="16" height="16" fill="#3d95d0"/><rect x="20" y="0" width="17" height="16" fill="#9a9a9a"/><rect x="24" y="5" width="9" height="6" fill="#3c3f41"/><rect x="0" y="20" width="16" height="16" fill="#9a9a9a"/><rect x="4" y="24" width="8" height="8" fill="#3c3f41"/><rect x="20" y="20" width="17" height="16" fill="#3d95d0"/></svg>
<div class="t" style="left:1365px;top:1184px;color:#bbbbbb;"><i><b style="width:20.6px;margin-left:-1.3px;transform:scaleX(0.802)">S</b></i><i><b style="width:18.5px;margin-left:-0.2px;transform:scaleX(0.892)">p</b></i><i>e</i><i>c</i><i>i</i><i>a</i><i>l</i><i> </i><i><b style="width:26.7px;margin-left:-4.4px;transform:scaleX(0.618)">V</b></i><i>a</i><i>r</i><i>i</i><i>a</i><i><b style="width:18.5px;margin-left:-0.2px;transform:scaleX(0.892)">b</b></i><i>l</i><i>e</i><i>s</i></div>
<svg style="left:1313px;top:1245px;" width="37" height="36" viewBox="0 0 37 36"><rect x="1.5" y="1.5" width="34" height="33" fill="#2d5775" stroke="#9a9a9a" stroke-width="3"/><text x="18.5" y="17" text-anchor="middle" font-family="Liberation Sans" font-weight="bold" font-size="15.5" fill="#c8c8c8">10</text><text x="18.5" y="31.5" text-anchor="middle" font-family="Liberation Sans" font-weight="bold" font-size="15.5" fill="#c8c8c8">01</text></svg>
<div class="t" style="left:1366px;top:1248px;color:#bbbbbb;"><span style="color:#5394ec"><i>i</i></span><i> </i><i><b style="width:20.9px;margin-left:-1.4px;transform:scaleX(0.791)">=</b></i><i> </i><span style="color:#707070"><i><b style="width:17.8px;margin-left:0.1px;transform:scaleX(0.929)">{</b></i><i>i</i><i><b style="width:18.5px;margin-left:-0.2px;transform:scaleX(0.892)">n</b></i><i>t</i><i><b style="width:17.8px;margin-left:0.1px;transform:scaleX(0.929)">}</b></i></span><i> </i><i><b style="width:18.5px;margin-left:-0.2px;transform:scaleX(0.892)">0</b></i></div>
<svg style="left:1313px;top:1309px;" width="37" height="36" viewBox="0 0 37 36"><rect x="1.5" y="1.5" width="34" height="33" fill="#2d5775" stroke="#9a9a9a" stroke-width="3"/><text x="18.5" y="17" text-anchor="middle" font-family="Liberation Sans" font-weight="bold" font-size="15.5" fill="#c8c8c8">10</text><text x="18.5" y="31.5" text-anchor="middle" font-family="Liberation Sans" font-weight="bold" font-size="15.5" fill="#c8c8c8">01</text></svg>
<div class="t" style="left:1365px;top:1312px;color:#bbbbbb;"><span style="color:#5394ec"><i><b style="width:28.8px;margin-left:-5.4px;transform:scaleX(0.573)">m</b></i><i><b style="width:18.5px;margin-left:-0.2px;transform:scaleX(0.892)">y</b></i><i><b style="width:20.6px;margin-left:-1.3px;transform:scaleX(0.802)">S</b></i><i><b style="width:18.5px;margin-left:-0.2px;transform:scaleX(0.892)">u</b></i><i><b style="width:28.8px;margin-left:-5.4px;transform:scaleX(0.573)">m</b></i></span><i> </i><i><b style="width:20.9px;margin-left:-1.4px;transform:scaleX(0.791)">=</b></i><i> </i><span style="color:#707070"><i><b style="width:17.8px;margin-left:0.1px;transform:scaleX(0.929)">{</b></i><i>i</i><i><b style="width:18.5px;margin-left:-0.2px;transform:scaleX(0.892)">n</b></i><i>t</i><i><b style="width:17.8px;margin-left:0.1px;transform:scaleX(0.929)">}</b></i></span><i> </i><i><b style="width:18.5px;margin-left:-0.2px;transform:scaleX(0.892)">0</b></i></div>
<div class="a" style="left:1166px;top:1036px;width:624px;height:372px;border:1px solid #ff3b3b"></div>
<div class="a" style="left:0px;top:1606px;width:2736px;height:1px;background:#35373a;"></div>
<div class="a" style="left:0px;top:1607px;width:2736px;height:70px;background:#3c3f41;"></div>
<div class="a" style="left:0px;top:1607px;width:2736px;height:3px;background:#4f5153;"></div>
<div class="a" style="left:276px;top:1610px;width:247px;height:67px;background:#2d2f30;"></div>
<svg style="left:102px;top:1624px;" width="33" height="38" viewBox="0 0 33 38"><path d="M0 0L33 19L0 38Z" fill="url(#rg)"/></svg>
<div class="t v" style="left:144px;top:1625px;color:#bbbbbb;"><i class="u"><b style="width:18.5px;margin-left:-0.8px;transform:scaleX(0.892)">4</b></i><i>:</i><i> </i><i><b style="width:24.7px;margin-left:-3.8px;transform:scaleX(0.669)">R</b></i><i><b style="width:18.5px;margin-left:-0.8px;transform:scaleX(0.892)">u</b></i><i><b style="width:18.5px;margin-left:-0.8px;transform:scaleX(0.892)">n</b></i></div>
<svg style="left:309px;top:1622px;" width="41" height="41" viewBox="0 0 41 41"><g transform="scale(0.86)"><g stroke="#9a9a9a" stroke-width="2.2" fill="none" stroke-linecap="round"><path d="M1 3C5 2 7 4 9 8M13 0C14 3 16 5 17 8M27 2C24 2 23 4 22 7M1 45C5 46 7 44 9 40M13 46C14 43 16 41 17 38M27 44C24 44 23 42 22 39M40 12C37 11 35 13 35 16M40 34C37 35 35 33 35 30M35 21H39M35 25H39"/></g><defs><linearGradient id="bgd" x1="0" y1="0" x2="0" y2="1"><stop offset="0" stop-color="#4cc063"/><stop offset="1" stop-color="#2a9a45"/></linearGradient></defs><circle cx="17" cy="23" r="15.5" fill="url(#bgd)"/><path d="M2 23H30" stroke="#2b8a40" stroke-width="1.8"/><ellipse cx="30" cy="23" rx="4.8" ry="9.5" fill="#a8a8a8" stroke="#3c3f41" stroke-width="1.2"/><circle cx="40" cy="41" r="6.3" fill="#1a1a1a"/><circle cx="40" cy="41" r="5" fill="#10e010"/></g></svg>
<div class="t v" style="left:357px;top:1625px;color:#e0e0e0;"><i class="u"><b style="width:18.5px;margin-left:-0.8px;transform:scaleX(0.892)">5</b></i><i>:</i><i> </i><i><b style="width:26.7px;margin-left:-4.9px;transform:scaleX(0.618)">D</b></i><i>e</i><i><b style="width:18.5px;margin-left:-0.8px;transform:scaleX(0.892)">b</b></i><i><b style="width:18.5px;margin-left:-0.8px;transform:scaleX(0.892)">u</b></i><i><b style="width:18.5px;margin-left:-0.8px;transform:scaleX(0.892)">g</b></i></div>
<svg style="left:557px;top:1621px;" width="40" height="43" viewBox="0 0 40 43"><circle cx="9" cy="9" r="9" fill="#e8e8e8"/><path d="M5 7H13M5 10H13" stroke="#555" stroke-width="1.5"/><circle cx="24" cy="25" r="11" fill="#f0c08a"/><path d="M13 20C14 12 34 12 35 20Z" fill="#8a8a8a"/><path d="M10 43C12 34 36 34 38 43Z" fill="#3d95d0"/></svg>
<div class="t v" style="left:605px;top:1625px;color:#bbbbbb;"><i class="u"><b style="width:18.5px;margin-left:-0.8px;transform:scaleX(0.892)">6</b></i><i>:</i><i> </i><i><b style="width:22.6px;margin-left:-2.8px;transform:scaleX(0.730)">T</b></i><i><b style="width:26.7px;margin-left:-4.9px;transform:scaleX(0.618)">O</b></i><i><b style="width:26.7px;margin-left:-4.9px;transform:scaleX(0.618)">D</b></i><i><b style="width:26.7px;margin-left:-4.9px;transform:scaleX(0.618)">O</b></i></div>
<svg style="left:795px;top:1621px;" width="40" height="43" viewBox="0 0 40 43"><path d="M15 1C8 1 8 4 8 6V9H16V11H4C1 11 0 13 0 17C0 21 1 24 4 24H7V20C7 17 9 15 12 15H20C22 15 23 13 23 11V5C23 3 21 1 15 1Z" fill="#4a9fd8"/><path d="M17 33C24 33 24 30 24 28V25H16V23H28C31 23 32 21 32 17C32 13 31 10 28 10H25V14C25 17 23 19 20 19H12C10 19 9 21 9 23V29C9 31 11 33 17 33Z" fill="#f2c30f"/><path d="M26 24L36 33L26 42" fill="none" stroke="#a8a8a8" stroke-width="3.5"/></svg>
<div class="t v" style="left:842px;top:1625px;color:#bbbbbb;"><i><b style="width:20.6px;margin-left:-1.8px;transform:scaleX(0.802)">P</b></i><i><b style="width:18.5px;margin-left:-0.8px;transform:scaleX(0.892)">y</b></i><i>t</i><i><b style="width:18.5px;margin-left:-0.8px;transform:scaleX(0.892)">h</b></i><i><b style="width:18.5px;margin-left:-0.8px;transform:scaleX(0.892)">o</b></i><i><b style="width:18.5px;margin-left:-0.8px;transform:scaleX(0.892)">n</b></i><i> </i><i><b style="width:24.7px;margin-left:-3.8px;transform:scaleX(0.669)">C</b></i><i><b style="width:18.5px;margin-left:-0.8px;transform:scaleX(0.892)">o</b></i><i><b style="width:18.5px;margin-left:-0.8px;transform:scaleX(0.892)">n</b></i><i>s</i><i><b style="width:18.5px;margin-left:-0.8px;transform:scaleX(0.892)">o</b></i><i>l</i><i>e</i></div>
<svg style="left:1150px;top:1623px;" width="39" height="38" viewBox="0 0 39 38"><rect x="1.5" y="1.5" width="36" height="35" fill="#0a0a0a" stroke="#8c8c8c" stroke-width="3"/><path d="M8 16L15 20L8 24" fill="none" stroke="#e8e8e8" stroke-width="2"/><rect x="17" y="24" width="10" height="2.5" fill="#e8e8e8"/></svg>
<div class="t v" style="left:1198px;top:1625px;color:#bbbbbb;"><i><b style="width:22.6px;margin-left:-2.8px;transform:scaleX(0.730)">T</b></i><i>e</i><i>r</i><i><b style="width:28.8px;margin-left:-5.9px;transform:scaleX(0.573)">m</b></i><i>i</i><i><b style="width:18.5px;margin-left:-0.8px;transform:scaleX(0.892)">n</b></i><i>a</i><i>l</i></div>
<svg style="left:2425px;top:1621px;" width="49" height="43" viewBox="0 0 49 43"><path d="M24 2C12 2 3 9 3 19C3 29 12 36 24 36H32L42 42L39 33C43 30 46 25 46 19C46 9 37 2 24 2Z" fill="none" stroke="#8c8c8c" stroke-width="3.5"/></svg>
<div class="t v" style="left:2481px;top:1625px;color:#bbbbbb;"><i><b style="width:22.6px;margin-left:-2.8px;transform:scaleX(0.730)">E</b></i><i><b style="width:18.5px;margin-left:-0.8px;transform:scaleX(0.892)">v</b></i><i>e</i><i><b style="width:18.5px;margin-left:-0.8px;transform:scaleX(0.892)">n</b></i><i>t</i><i> </i><i><b style="width:22.6px;margin-left:-2.8px;transform:scaleX(0.730)">L</b></i><i><b style="width:18.5px;margin-left:-0.8px;transform:scaleX(0.892)">o</b></i><i><b style="width:18.5px;margin-left:-0.8px;transform:scaleX(0.892)">g</b></i></div>
<div class="a" style="left:0px;top:1677px;width:2736px;height:2px;background:#474a4c;"></div>
<div class="a" style="left:0px;top:1679px;width:2736px;height:62px;background:#3c3f41;"></div>
<svg style="left:23px;top:1692px;" width="42" height="42" viewBox="0 0 42 42"><rect x="1.5" y="1.5" width="39" height="34" fill="#5c5f61" stroke="#9a9a9a" stroke-width="3"/><rect x="0" y="39" width="42" height="3" fill="#9a9a9a"/></svg>
<div class="t" style="left:2252px;top:1692px;color:#bbbbbb;"><i><b style="width:18.5px;margin-left:-0.2px;transform:scaleX(0.892)">5</b></i><i>:</i><i><b style="width:18.5px;margin-left:-0.2px;transform:scaleX(0.892)">1</b></i></div>
<div class="t" style="left:2339px;top:1692px;color:#bbbbbb;"><i><b style="width:24.7px;margin-left:-3.3px;transform:scaleX(0.669)">C</b></i><i><b style="width:24.7px;margin-left:-3.3px;transform:scaleX(0.669)">R</b></i><i><b style="width:22.6px;margin-left:-2.3px;transform:scaleX(0.730)">L</b></i><i><b style="width:20.6px;margin-left:-1.3px;transform:scaleX(0.802)">F</b></i></div>
<svg style="left:2410px;top:1703px;" width="18" height="26" viewBox="0 0 18 26"><path d="M0 10L9 0L18 10Z M0 16L9 26L18 16Z" fill="#a8a8a8"/></svg>
<div class="t" style="left:2459px;top:1692px;color:#bbbbbb;"><i><b style="width:26.7px;margin-left:-4.4px;transform:scaleX(0.618)">U</b></i><i><b style="width:22.6px;margin-left:-2.3px;transform:scaleX(0.730)">T</b></i><i><b style="width:20.6px;margin-left:-1.3px;transform:scaleX(0.802)">F</b></i><i><b style="width:18.5px;margin-left:-0.2px;transform:scaleX(0.892)">–</b></i><i><b style="width:18.5px;margin-left:-0.2px;transform:scaleX(0.892)">8</b></i></div>
<svg style="left:2548px;top:1703px;" width="18" height="26" viewBox="0 0 18 26"><path d="M0 10L9 0L18 10Z M0 16L9 26L18 16Z" fill="#a8a8a8"/></svg>
<svg style="left:2605px;top:1701px;" width="28" height="27" viewBox="0 0 28 27"><path d="M1.5 11V6C1.5 0.5 13 0.5 13 6V9" fill="none" stroke="#8c8c8c" stroke-width="3"/><rect x="7" y="9" width="21" height="17" rx="3" fill="#8c8c8c"/><path d="M12 14H23M17.5 14V22" stroke="#3c3f41" stroke-width="2.5"/></svg>
<svg style="left:2674px;top:1692px;" width="39" height="42" viewBox="0 0 39 42"><g fill="none" stroke="#8c8c8c" stroke-width="3"><path d="M8 14C8 1 31 1 31 14"/><path d="M1 15H38"/><path d="M9 15V25C9 33 30 33 30 25V15"/><path d="M13 28C16 23 23 23 26 28"/><path d="M9 34H30M7 41H15M24 41H32"/></g><circle cx="19.5" cy="7" r="2.5" fill="#8c8c8c"/><rect x="12" y="19" width="5" height="2.5" fill="#8c8c8c"/><rect x="22" y="19" width="5" height="2.5" fill="#8c8c8c"/></svg>
</body></html>
